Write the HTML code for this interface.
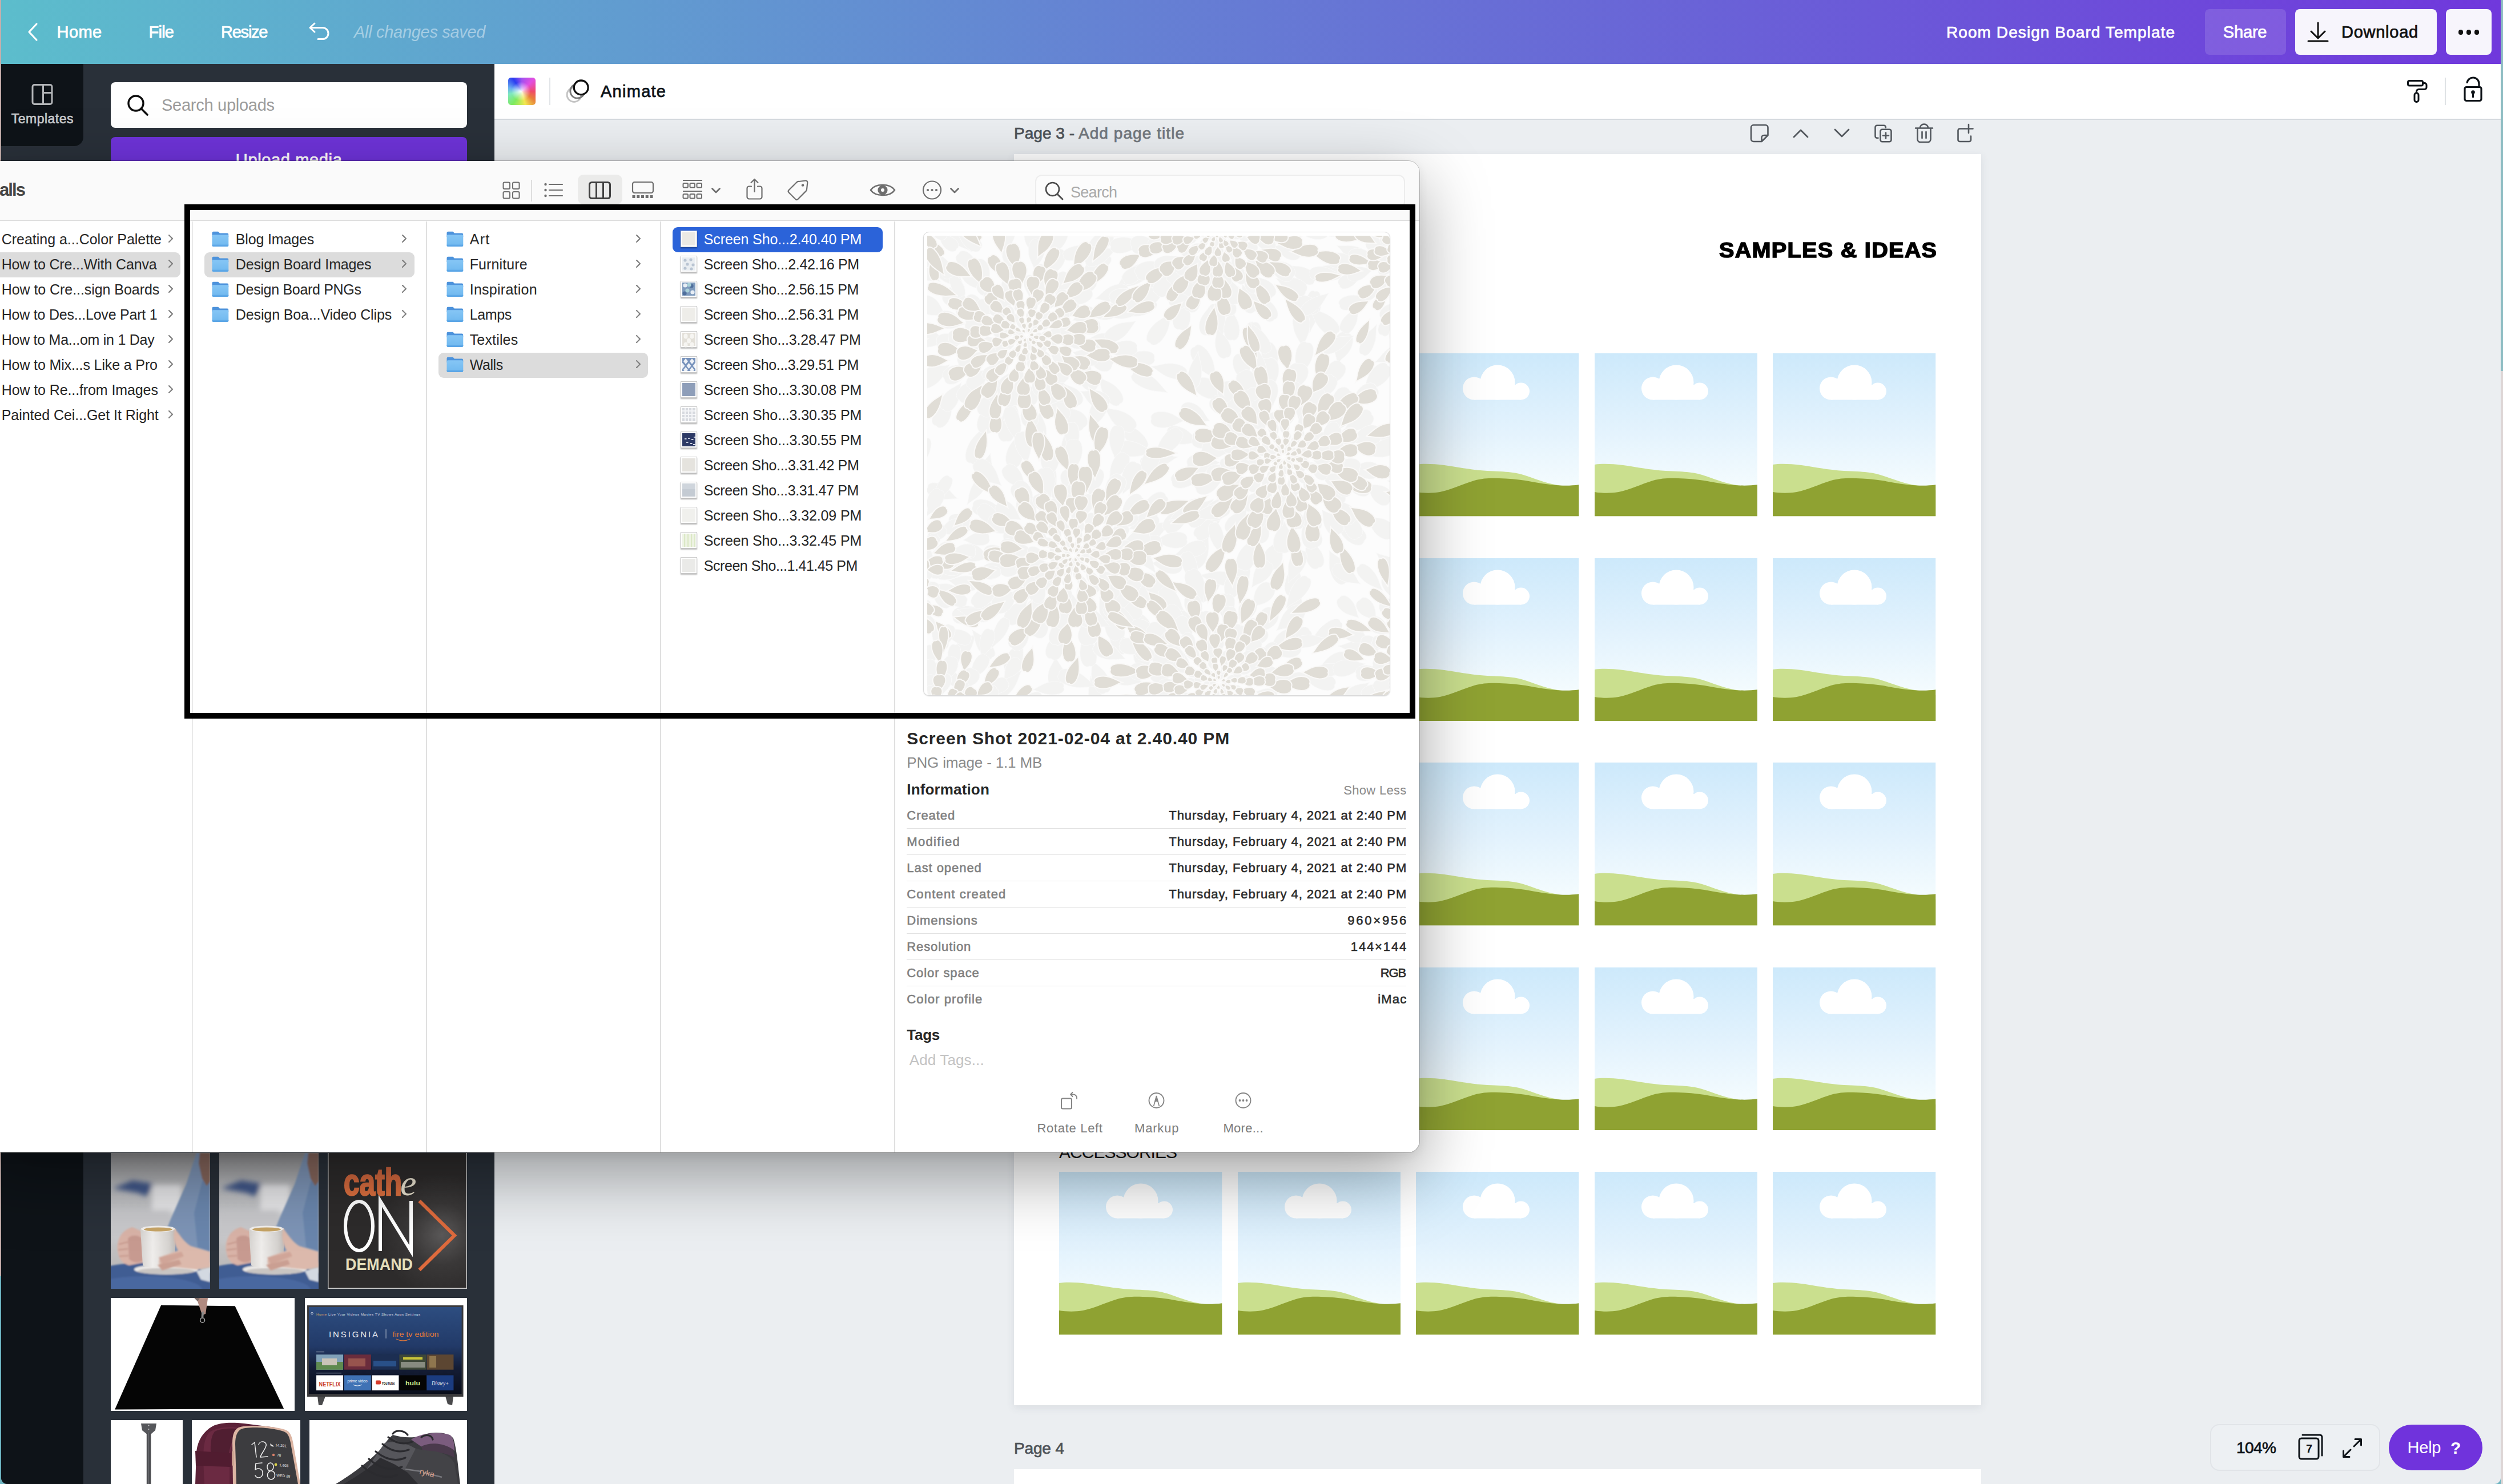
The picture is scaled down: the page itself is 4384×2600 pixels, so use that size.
<!DOCTYPE html>
<html><head><meta charset="utf-8"><title>Canva</title><style>html,body{margin:0;padding:0;overflow:hidden;}
#root{position:absolute;left:0;top:0;width:4384px;height:2600px;overflow:hidden;}
body{width:4384px;height:2600px;overflow:hidden;position:relative;background:#ebeef1;font-family:"Liberation Sans",sans-serif;}
.b{position:absolute;display:block;}
.t{position:absolute;white-space:pre;font-family:"Liberation Sans",sans-serif;}
</style></head><body><div id="root">
<svg width="0" height="0" style="position:absolute"><defs>
<linearGradient id="sky" x1="0" y1="0" x2="0" y2="1"><stop offset="0" stop-color="#cde9fb"/><stop offset="0.45" stop-color="#e2f2fd"/><stop offset="0.8" stop-color="#f3fbfe"/></linearGradient>
<symbol id="ph" viewBox="0 0 285.5 285.5">
<rect width="285.5" height="285.5" fill="url(#sky)"/>
<path d="M0 195 C12 193 30 193.5 50 196 C75 199.5 95 204 125 206 C160 207.5 175 208 196 215.5 C215 222 232 229 252 231.5 L285.5 240 L285.5 285.5 L0 285.5 Z" fill="#cadf8e"/>
<path d="M0 243 C12 245 28 245.5 42 243 C62 239 82 229 102 223 C118 218.5 132 218.5 146 219 C162 219.5 176 220.5 192 223 C212 226.5 232 230.5 252 231.5 C266 232 276 231.5 285.5 230.2 L285.5 285.5 L0 285.5 Z" fill="#8fa232"/>
<circle cx="102" cy="61.5" r="20" fill="#fff"/><circle cx="143" cy="51" r="30.5" fill="#fff"/><circle cx="184" cy="66.5" r="15" fill="#fff"/>
<rect x="102" y="55" width="82" height="26.5" fill="#fff"/>
</symbol></defs></svg>
<div class="b" style="left:0px;top:0px;width:4384px;height:2600px;background:linear-gradient(#c5afac 0,#c5afac 86%,#6eb5c2 86%,#6eb5c2 100%);"></div>
<div class="b" style="left:4380px;top:0px;width:4px;height:2600px;background:linear-gradient(#8dbcc2 0,#8dbcc2 25%,#ddd5d5 25%,#ddd5d5 100%);"></div>
<div class="b" style="left:2px;top:0px;width:4378px;height:2600px;background:#ebeef1;border-bottom-right-radius:11px;border-bottom-left-radius:11px;"></div>
<div class="b" style="left:2px;top:0px;width:4378px;height:112px;background:linear-gradient(90deg,#5cbdcc 0%,#7038dc 100%);"></div>
<svg class="b" style="left:46px;top:36px;" width="24" height="40" viewBox="0 0 24 40"><path d="M18 6 L5 20 L18 34" fill="none" stroke="#fff" stroke-width="3.2" stroke-linecap="round" stroke-linejoin="round"/></svg>
<div class="t" style="top:37.0px;font-size:29px;line-height:38px;color:#fff;-webkit-text-stroke:0.75px #fff;letter-spacing:0.380px;left:99.6px;">Home</div>
<div class="t" style="top:37.0px;font-size:29px;line-height:38px;color:#fff;-webkit-text-stroke:0.75px #fff;letter-spacing:-0.745px;left:260.5px;">File</div>
<div class="t" style="top:37.0px;font-size:29px;line-height:38px;color:#fff;-webkit-text-stroke:0.75px #fff;letter-spacing:-1.231px;left:387.0px;">Resize</div>
<svg class="b" style="left:538px;top:36px;" width="44" height="38" viewBox="0 0 44 38"><path d="M13 5 L5 12.5 L13 20 M5 12.5 H27 a10 10 0 0 1 0 20 H19" fill="none" stroke="#fff" stroke-width="3" stroke-linecap="round" stroke-linejoin="round"/></svg>
<div class="t" style="top:37.0px;font-size:29px;line-height:38px;color:rgba(255,255,255,0.45);font-style:italic;letter-spacing:-0.305px;left:620.0px;">All changes saved</div>
<div class="t" style="top:39.0px;font-size:28px;line-height:36px;color:#fff;-webkit-text-stroke:0.73px #fff;letter-spacing:1.079px;left:3409.0px;">Room Design Board Template</div>
<div class="b" style="left:3862px;top:16px;width:142px;height:80px;background:rgba(255,255,255,0.13);border-radius:8px;"></div>
<div class="t" style="top:37.0px;font-size:29px;line-height:38px;color:#fff;-webkit-text-stroke:0.75px #fff;letter-spacing:-0.173px;left:3893.8px;">Share</div>
<div class="b" style="left:4020px;top:16px;width:248px;height:80px;background:#f7f5fc;border-radius:8px;"></div>
<svg class="b" style="left:4040px;top:36px;" width="40" height="40" viewBox="0 0 40 40"><path d="M20 4 V30 M8 19 L20 31 L32 19 M3 36 H37" fill="none" stroke="#111" stroke-width="3" stroke-linecap="round" stroke-linejoin="round"/></svg>
<div class="t" style="top:37.0px;font-size:29px;line-height:38px;color:#111;-webkit-text-stroke:0.75px #111;letter-spacing:0.745px;left:4101.0px;">Download</div>
<div class="b" style="left:4284px;top:16px;width:80px;height:80px;background:#f7f5fc;border-radius:8px;"></div>
<div class="b" style="left:4305.9px;top:52.0px;width:8.6px;height:8.6px;background:#111;border-radius:50%;"></div>
<div class="b" style="left:4319.9px;top:52.0px;width:8.6px;height:8.6px;background:#111;border-radius:50%;"></div>
<div class="b" style="left:4333.9px;top:52.0px;width:8.6px;height:8.6px;background:#111;border-radius:50%;"></div>
<div class="b" style="left:2px;top:112px;width:864px;height:2488px;background:#293039;border-bottom-left-radius:11px;"></div>
<div class="b" style="left:2px;top:112px;width:144px;height:144px;background:#0e1318;border-bottom-right-radius:16px;"></div>
<div class="b" style="left:2px;top:400px;width:144px;height:2200px;background:#0e1318;border-bottom-left-radius:11px;"></div>
<svg class="b" style="left:54px;top:145px;" width="40" height="40" viewBox="0 0 40 40"><rect x="3" y="3.5" width="34" height="34" rx="3.5" fill="none" stroke="#b3b5b8" stroke-width="3"/><path d="M21.5 3.5 V37.5 M21.5 17.5 H37" stroke="#b3b5b8" stroke-width="3" fill="none"/></svg>
<div class="t" style="top:193.0px;font-size:23px;line-height:30px;color:#c9cacc;-webkit-text-stroke:0.60px #c9cacc;letter-spacing:0.471px;left:19.8px;">Templates</div>
<div class="b" style="left:194px;top:144px;width:624px;height:80px;background:#fff;border-radius:8px;"></div>
<svg class="b" style="left:220px;top:163px;" width="44" height="42" viewBox="0 0 44 42"><circle cx="18" cy="18" r="13" fill="none" stroke="#0d0d0d" stroke-width="3.4"/><path d="M27.5 27.5 L38 38" stroke="#0d0d0d" stroke-width="3.6" stroke-linecap="round"/></svg>
<div class="t" style="top:165.0px;font-size:29px;line-height:38px;color:#9b9b9b;letter-spacing:-0.272px;left:283.0px;">Search uploads</div>
<div class="b" style="left:194px;top:240px;width:624px;height:80px;background:#6e33d8;border-radius:8px;"></div>
<div class="t" style="top:260.5px;font-size:29px;line-height:38px;color:#fff;-webkit-text-stroke:0.75px #fff;letter-spacing:0.641px;left:412.8px;">Upload media</div>
<div class="b" style="left:866px;top:112px;width:3514px;height:96px;background:#fff;"></div>
<div class="b" style="left:866px;top:208px;width:3514px;height:2px;background:#d4d9de;"></div>
<div class="b" style="left:890px;top:136px;width:48px;height:48px;border-radius:5px;background:radial-gradient(circle at 47% 50%,rgba(255,255,255,.95) 0,rgba(255,255,255,.55) 18%,rgba(255,255,255,0) 48%),conic-gradient(from 0deg at 50% 50%,#a050f0 0deg,#e24fe0 45deg,#f04a6a 90deg,#e8803a 125deg,#f2e850 165deg,#7eea60 215deg,#7ee8c0 258deg,#6ab0f0 285deg,#2a3cf0 325deg,#a050f0 360deg);"></div>
<div class="b" style="left:962px;top:136px;width:2px;height:48px;background:#e1e4e7;"></div>
<svg class="b" style="left:988px;top:136px;" width="48" height="48" viewBox="0 0 48 48"><circle cx="17.5" cy="30" r="12.4" fill="none" stroke="#c4c4c4" stroke-width="3"/><circle cx="23.3" cy="23.7" r="12.4" fill="none" stroke="#7c7c7c" stroke-width="3"/><circle cx="29.7" cy="17.4" r="12.4" fill="#fff" stroke="#111" stroke-width="3.3"/></svg>
<div class="t" style="top:141.0px;font-size:29px;line-height:38px;color:#0e1318;-webkit-text-stroke:0.75px #0e1318;letter-spacing:1.268px;left:1052.0px;">Animate</div>
<svg class="b" style="left:4212px;top:136px;" width="44" height="48" viewBox="0 0 44 48"><rect x="5.5" y="5.5" width="26" height="8.5" rx="2.5" fill="none" stroke="#0e1318" stroke-width="3"/><path d="M31.5 9.5 H34.5 a3.5 3.5 0 0 1 3.5 3.5 V17 a3.5 3.5 0 0 1 -3.5 3.5 H24.5 a4 4 0 0 0 -4 4 V27" fill="none" stroke="#0e1318" stroke-width="3"/><rect x="17" y="27" width="7" height="15.5" rx="3.2" fill="none" stroke="#0e1318" stroke-width="3"/></svg>
<div class="b" style="left:4282px;top:136px;width:2px;height:48px;background:#dfe2e5;"></div>
<svg class="b" style="left:4310px;top:132px;" width="44" height="50" viewBox="0 0 44 50"><rect x="7" y="20.5" width="29" height="24" rx="3" fill="none" stroke="#0e1318" stroke-width="3.2"/><path d="M11 14 a10.5 10.5 0 0 1 21 1 V20" fill="none" stroke="#0e1318" stroke-width="3.2"/><circle cx="21.5" cy="29.5" r="3.3" fill="#0e1318"/><path d="M21.5 30 V38" stroke="#0e1318" stroke-width="3" stroke-linecap="round"/></svg>
<div class="t" style="top:216.0px;font-size:28px;line-height:36px;color:#4d5258;-webkit-text-stroke:0.73px #4d5258;letter-spacing:0.020px;left:1776.0px;">Page 3 -</div>
<div class="t" style="top:216.0px;font-size:28px;line-height:36px;color:#72777d;-webkit-text-stroke:0.73px #72777d;letter-spacing:1.058px;left:1889.0px;">Add page title</div>
<svg class="b" style="left:3062px;top:215px;" width="38" height="38" viewBox="0 0 38 38"><path d="M34.5 22 V8.5 a4.5 4.5 0 0 0 -4.5 -4.5 H9.5 a4.5 4.5 0 0 0 -4.5 4.5 V28.5 a4.5 4.5 0 0 0 4.5 4.5 H23.5 Z M23.5 33 V26 a4 4 0 0 1 4 -4 H34.5" fill="none" stroke="#52575d" stroke-width="2.6" stroke-linejoin="round"/></svg>
<svg class="b" style="left:3138px;top:220px;" width="32" height="28" viewBox="0 0 32 28"><path d="M4 20 L16 8 L28 20" fill="none" stroke="#52575d" stroke-width="2.8" stroke-linecap="round" stroke-linejoin="round"/></svg>
<svg class="b" style="left:3210px;top:220px;" width="32" height="28" viewBox="0 0 32 28"><path d="M4 7 L16 19 L28 7" fill="none" stroke="#52575d" stroke-width="2.8" stroke-linecap="round" stroke-linejoin="round"/></svg>
<svg class="b" style="left:3280px;top:215px;" width="38" height="38" viewBox="0 0 38 38"><rect x="13.5" y="11.7" width="19" height="21.6" rx="3.2" fill="none" stroke="#52575d" stroke-width="2.6"/><path d="M9.5 26.8 H7.5 a3 3 0 0 1 -3 -3 V7.7 a3 3 0 0 1 3 -3 H19.8 a3 3 0 0 1 3 3 V8.5" fill="none" stroke="#52575d" stroke-width="2.6" stroke-linecap="round"/><path d="M23 17.5 V27.5 M18 22.5 H28" stroke="#52575d" stroke-width="2.6" stroke-linecap="round"/></svg>
<svg class="b" style="left:3351px;top:214px;" width="38" height="40" viewBox="0 0 38 40"><path d="M4 10.5 H34 M7.5 10.5 V30 a5 5 0 0 0 5 5 H25.5 a5 5 0 0 0 5 -5 V10.5 M12 10 a7 6.5 0 0 1 14 0 M15.5 17 V28 M22.5 17 V28" fill="none" stroke="#52575d" stroke-width="2.6" stroke-linecap="round" stroke-linejoin="round"/></svg>
<svg class="b" style="left:3424px;top:213.5px;" width="38" height="40" viewBox="0 0 38 40"><path d="M16 11.5 H8.5 a3 3 0 0 0 -3 3 V31 a3 3 0 0 0 3 3 H25 a3 3 0 0 0 3 -3 V24.5 M24 4 V19 M16.5 11.5 H31.5" fill="none" stroke="#52575d" stroke-width="2.6" stroke-linecap="round" stroke-linejoin="round"/></svg>
<div class="b" style="left:1776px;top:270px;width:1694px;height:2192px;background:#fff;box-shadow:0 4px 14px rgba(60,70,90,0.10);"></div>
<div class="t" style="top:415.2px;font-size:37px;line-height:48px;color:#000;font-weight:700;letter-spacing:1.204px;left:3010.5px;transform:scaleX(1.07);transform-origin:0 50%;-webkit-text-stroke:1.5px #000;">SAMPLES &amp; IDEAS</div>
<div class="t" style="top:1998.5px;font-size:30px;line-height:39px;color:#111;letter-spacing:-0.973px;left:1855.0px;">ACCESSORIES</div>
<svg class="b" style="left:2480px;top:619px" width="285.5" height="285.5"><use href="#ph"/></svg>
<svg class="b" style="left:2792.5px;top:619px" width="285.5" height="285.5"><use href="#ph"/></svg>
<svg class="b" style="left:3105px;top:619px" width="285.5" height="285.5"><use href="#ph"/></svg>
<svg class="b" style="left:2480px;top:977.5px" width="285.5" height="285.5"><use href="#ph"/></svg>
<svg class="b" style="left:2792.5px;top:977.5px" width="285.5" height="285.5"><use href="#ph"/></svg>
<svg class="b" style="left:3105px;top:977.5px" width="285.5" height="285.5"><use href="#ph"/></svg>
<svg class="b" style="left:2480px;top:1336px" width="285.5" height="285.5"><use href="#ph"/></svg>
<svg class="b" style="left:2792.5px;top:1336px" width="285.5" height="285.5"><use href="#ph"/></svg>
<svg class="b" style="left:3105px;top:1336px" width="285.5" height="285.5"><use href="#ph"/></svg>
<svg class="b" style="left:2480px;top:1694.5px" width="285.5" height="285.5"><use href="#ph"/></svg>
<svg class="b" style="left:2792.5px;top:1694.5px" width="285.5" height="285.5"><use href="#ph"/></svg>
<svg class="b" style="left:3105px;top:1694.5px" width="285.5" height="285.5"><use href="#ph"/></svg>
<svg class="b" style="left:1855px;top:2053px" width="285.5" height="285.5"><use href="#ph"/></svg>
<svg class="b" style="left:2167.5px;top:2053px" width="285.5" height="285.5"><use href="#ph"/></svg>
<svg class="b" style="left:2480px;top:2053px" width="285.5" height="285.5"><use href="#ph"/></svg>
<svg class="b" style="left:2792.5px;top:2053px" width="285.5" height="285.5"><use href="#ph"/></svg>
<svg class="b" style="left:3105px;top:2053px" width="285.5" height="285.5"><use href="#ph"/></svg>
<div class="t" style="top:2520.0px;font-size:28px;line-height:36px;color:#4d5258;-webkit-text-stroke:0.73px #4d5258;letter-spacing:-0.150px;left:1776.0px;">Page 4</div>
<div class="b" style="left:1776px;top:2574px;width:1694px;height:26px;background:#fff;"></div>
<div class="b" style="left:3871px;top:2495px;width:298px;height:82px;box-sizing:border-box;border:2px solid #e1e4e8;border-radius:16px;background:#edf0f3;"></div>
<div class="t" style="top:2519.0px;font-size:28px;line-height:36px;color:#0e1318;-webkit-text-stroke:0.73px #0e1318;letter-spacing:-0.542px;left:3917.0px;">104%</div>
<svg class="b" style="left:4024px;top:2510px;" width="50" height="50" viewBox="0 0 50 50"><rect x="3" y="10" width="34" height="36" rx="4" fill="none" stroke="#0e1318" stroke-width="3"/><path d="M9 4 H39 a4 4 0 0 1 4 4 V40" fill="none" stroke="#0e1318" stroke-width="3" stroke-linecap="round"/></svg>
<div class="t" style="top:2525.0px;font-size:20px;line-height:26px;color:#0e1318;font-weight:700;left:4039.0px;">7</div>
<svg class="b" style="left:4100px;top:2517px;" width="40" height="40" viewBox="0 0 40 40"><path d="M23 17 L35 5 M25 4.5 H35.5 V15 M17 23 L5 35 M4.5 25 V35.5 H15" fill="none" stroke="#0e1318" stroke-width="3" stroke-linecap="round" stroke-linejoin="round"/></svg>
<div class="b" style="left:4184px;top:2496px;width:164px;height:80px;background:#7033dc;border-radius:40px;"></div>
<div class="t" style="top:2517.0px;font-size:29px;line-height:38px;color:#fff;letter-spacing:-0.219px;left:4216.5px;">Help</div>
<div class="t" style="top:2516.5px;font-size:30px;line-height:39px;color:#fff;font-weight:700;left:4292.0px;">?</div>
<svg class="b" style="left:193.8px;top:2019.5px;" width="174" height="238" viewBox="0 0 174 238"><defs>
<linearGradient id="cbga" x1="0" y1="0" x2="0" y2="1"><stop offset="0" stop-color="#8e8e90"/><stop offset="0.22" stop-color="#b4b5b8"/><stop offset="0.5" stop-color="#cbcccf"/><stop offset="0.8" stop-color="#bdbbbb"/></linearGradient>
<filter id="bla" x="-20%" y="-20%" width="140%" height="140%"><feGaussianBlur stdDeviation="5"/></filter>
<filter id="bsa" x="-20%" y="-20%" width="140%" height="140%"><feGaussianBlur stdDeviation="1.5"/></filter>
<linearGradient id="muga" x1="0" y1="0" x2="1" y2="0"><stop offset="0" stop-color="#d6d3d0"/><stop offset="0.35" stop-color="#efedeb"/><stop offset="0.8" stop-color="#d6d3d0"/><stop offset="1" stop-color="#bfbbb8"/></linearGradient>
</defs>
<rect width="174" height="238" fill="url(#cbga)"/>
<g filter="url(#bla)">
<path d="M4 62 L38 48 L76 54 L62 76 L48 70 Z" fill="#3f5788"/>
<rect x="72" y="56" width="52" height="50" fill="#e6e6e8"/>
<rect x="0" y="100" width="105" height="55" fill="#c8c8cb"/>
</g>
<g filter="url(#bsa)">
<path d="M174 0 L150 0 L132 55 L104 118 L92 150 L116 178 L174 192 Z" fill="#7d94b6"/>
<path d="M174 40 L160 50 L146 105 L152 165 L174 172 Z" fill="#6a86ad"/>
<path d="M174 0 L156 0 L154 18 L160 45 L168 58 L174 50 Z" fill="#86665c"/>
<ellipse cx="66" cy="236" rx="135" ry="44" fill="#405d93"/>
<ellipse cx="60" cy="240" rx="100" ry="24" fill="#4a68a0"/>
<path d="M150 207 L174 200 L174 226 L158 222 Z" fill="#d3d9e1"/>
<ellipse cx="97" cy="204" rx="56" ry="9" fill="#ebe9e7"/>
<ellipse cx="97" cy="207" rx="50" ry="5.5" fill="#c9c5c2"/>
<path d="M12 172 C9 152 20 134 38 130 L56 138 L58 192 L32 197 C18 193 14 184 12 172 Z" fill="#d9b3a7"/>
<path d="M30 150 C34 143 50 143 54 150 L56 188 C48 194 38 192 32 186 Z" fill="#c79a90"/>
<path d="M14 160 L30 156 M13 170 L30 168 M15 181 L31 180" stroke="#c39488" stroke-width="2" fill="none"/>
</g>
<path d="M52 134 C52 128 114 128 114 134 L112 196 C112 203 56 203 56 196 Z" fill="url(#muga)"/>
<ellipse cx="83" cy="133" rx="30" ry="5.5" fill="#f1efed"/>
<ellipse cx="83" cy="134" rx="25" ry="3.4" fill="#c7a466"/>
<g filter="url(#bsa)">
<path d="M112 132 C120 142 128 156 140 163 L174 173 L174 200 L150 204 L110 200 L88 197 C80 191 86 181 96 179 L118 171 C112 161 108 148 112 132 Z" fill="#dcb9ac"/>
<path d="M84 183 L124 173 L128 181 L90 195 Z" fill="#d0a598"/>
<path d="M82 196 L120 187 L124 195 L90 206 Z" fill="#ca9f92"/>
</g></svg>
<svg class="b" style="left:383.8px;top:2019.5px;" width="174" height="238" viewBox="0 0 174 238"><defs>
<linearGradient id="cbgb" x1="0" y1="0" x2="0" y2="1"><stop offset="0" stop-color="#8e8e90"/><stop offset="0.22" stop-color="#b4b5b8"/><stop offset="0.5" stop-color="#cbcccf"/><stop offset="0.8" stop-color="#bdbbbb"/></linearGradient>
<filter id="blb" x="-20%" y="-20%" width="140%" height="140%"><feGaussianBlur stdDeviation="5"/></filter>
<filter id="bsb" x="-20%" y="-20%" width="140%" height="140%"><feGaussianBlur stdDeviation="1.5"/></filter>
<linearGradient id="mugb" x1="0" y1="0" x2="1" y2="0"><stop offset="0" stop-color="#d6d3d0"/><stop offset="0.35" stop-color="#efedeb"/><stop offset="0.8" stop-color="#d6d3d0"/><stop offset="1" stop-color="#bfbbb8"/></linearGradient>
</defs>
<rect width="174" height="238" fill="url(#cbgb)"/>
<g filter="url(#blb)">
<path d="M4 62 L38 48 L76 54 L62 76 L48 70 Z" fill="#3f5788"/>
<rect x="72" y="56" width="52" height="50" fill="#e6e6e8"/>
<rect x="0" y="100" width="105" height="55" fill="#c8c8cb"/>
</g>
<g filter="url(#bsb)">
<path d="M174 0 L150 0 L132 55 L104 118 L92 150 L116 178 L174 192 Z" fill="#7d94b6"/>
<path d="M174 40 L160 50 L146 105 L152 165 L174 172 Z" fill="#6a86ad"/>
<path d="M174 0 L156 0 L154 18 L160 45 L168 58 L174 50 Z" fill="#86665c"/>
<ellipse cx="66" cy="236" rx="135" ry="44" fill="#405d93"/>
<ellipse cx="60" cy="240" rx="100" ry="24" fill="#4a68a0"/>
<path d="M150 207 L174 200 L174 226 L158 222 Z" fill="#d3d9e1"/>
<ellipse cx="97" cy="204" rx="56" ry="9" fill="#ebe9e7"/>
<ellipse cx="97" cy="207" rx="50" ry="5.5" fill="#c9c5c2"/>
<path d="M12 172 C9 152 20 134 38 130 L56 138 L58 192 L32 197 C18 193 14 184 12 172 Z" fill="#d9b3a7"/>
<path d="M30 150 C34 143 50 143 54 150 L56 188 C48 194 38 192 32 186 Z" fill="#c79a90"/>
<path d="M14 160 L30 156 M13 170 L30 168 M15 181 L31 180" stroke="#c39488" stroke-width="2" fill="none"/>
</g>
<path d="M52 134 C52 128 114 128 114 134 L112 196 C112 203 56 203 56 196 Z" fill="url(#mugb)"/>
<ellipse cx="83" cy="133" rx="30" ry="5.5" fill="#f1efed"/>
<ellipse cx="83" cy="134" rx="25" ry="3.4" fill="#c7a466"/>
<g filter="url(#bsb)">
<path d="M112 132 C120 142 128 156 140 163 L174 173 L174 200 L150 204 L110 200 L88 197 C80 191 86 181 96 179 L118 171 C112 161 108 148 112 132 Z" fill="#dcb9ac"/>
<path d="M84 183 L124 173 L128 181 L90 195 Z" fill="#d0a598"/>
<path d="M82 196 L120 187 L124 195 L90 206 Z" fill="#ca9f92"/>
</g></svg>
<svg class="b" style="left:573.9px;top:2019.5px;" width="244" height="238" viewBox="0 0 244 238"><defs><radialGradient id="cg" cx="0.82" cy="0.6" r="0.45"><stop offset="0" stop-color="#5b5959"/><stop offset="0.5" stop-color="#3a3838"/><stop offset="1" stop-color="#2d2b2b"/></radialGradient>
<linearGradient id="co" x1="0" y1="0" x2="0" y2="1"><stop offset="0" stop-color="#c9603c"/><stop offset="1" stop-color="#e27440"/></linearGradient></defs>
<rect width="244" height="238" fill="url(#cg)"/>
<rect x="0.75" y="-2" width="242.5" height="239.25" fill="none" stroke="#c9c9c9" stroke-width="1.5"/>
<text x="28" y="74" font-family="Liberation Sans" font-weight="700" font-size="66" fill="url(#co)" textLength="102" lengthAdjust="spacingAndGlyphs" stroke="url(#co)" stroke-width="2.5">cath</text>
<text x="127" y="74" font-family="Liberation Serif" font-style="italic" font-size="64" fill="#e9e2cf">e</text>
<ellipse cx="55" cy="128" rx="24" ry="43" fill="none" stroke="#fff" stroke-width="6"/>
<path d="M92 172 V84 L146 172 V84" fill="none" stroke="#fff" stroke-width="6" stroke-linejoin="miter"/>
<text x="31" y="204.5" font-family="Liberation Sans" font-weight="700" font-size="30" fill="#e4ddba" textLength="118" lengthAdjust="spacingAndGlyphs">DEMAND</text>
<path d="M160.5 84 L222 144.6 L160.5 205" fill="none" stroke="#df6b3d" stroke-width="6"/></svg>
<svg class="b" style="left:193.8px;top:2273.8px;" width="322.2" height="198" viewBox="0 0 322 198"><rect width="322" height="198" fill="#fff"/>
<path d="M88 12.7 L217.5 14.3 L303 194 L7 195.5 Z" fill="#050505"/>
<path d="M150 0 L170 0 L166 28 L160 30 Z" fill="#b08a80"/>
<path d="M146 0 L156 0 L152 6 Z" fill="#7c6a66"/>
<circle cx="160.5" cy="39" r="4" fill="none" stroke="#b5b5b5" stroke-width="1.5"/>
<path d="M159 24 L163 24 L162 36 L158.5 36 Z" fill="#8a8a8a"/></svg>
<svg class="b" style="left:533.9px;top:2273.8px;" width="284.1" height="198" viewBox="0 0 284 198"><defs><linearGradient id="tvg" x1="0" y1="0" x2="0" y2="1"><stop offset="0" stop-color="#2d4d80"/><stop offset="0.45" stop-color="#223a68"/><stop offset="0.7" stop-color="#141d36"/><stop offset="1" stop-color="#0a0e1b"/></linearGradient></defs>
<rect width="284" height="198" fill="#fff"/>
<path d="M22 172 L36 172 L30 188 L24 188 Z M246 172 L260 172 L258 188 L250 186 Z" fill="#4a4a4c"/>
<rect x="4" y="13" width="273.5" height="160" fill="#3a3a3c"/>
<rect x="7" y="16" width="267.5" height="152" fill="url(#tvg)"/>
<text x="20" y="30.5" font-family="Liberation Sans" font-size="6.2" fill="#d5dbe6" textLength="182" lengthAdjust="spacing"><tspan fill="#e0a86a">Home</tspan>  Live  Your Videos  Movies  TV Shows  Apps  Settings</text>
<circle cx="12.5" cy="27" r="1.8" fill="none" stroke="#d5dbe6" stroke-width="0.8"/>
<text x="42" y="69" font-family="Liberation Sans" font-size="15" fill="#e8ecf2" textLength="86" lengthAdjust="spacing">INSIGNIA</text>
<rect x="141.5" y="55" width="1" height="16" fill="#b9c2d0"/>
<text x="153.5" y="68" font-family="Liberation Sans" font-size="12.5" fill="#e4793a" textLength="81" lengthAdjust="spacingAndGlyphs">fire tv edition</text>
<path d="M160 72 Q172 78 184 72" fill="none" stroke="#e4793a" stroke-width="1.3"/>
<rect x="20" y="94" width="14" height="1.2" fill="#9aa5b8"/><rect x="20" y="131" width="44" height="1.2" fill="#9aa5b8"/><rect x="20" y="99.2" width="47" height="26.5" fill="#7fa0b8"/><rect x="68.8" y="99.2" width="47" height="26.5" fill="#6a2c3c"/><rect x="117.4" y="99.2" width="47" height="26.5" fill="#1c2e52"/><rect x="165.4" y="99.2" width="47" height="26.5" fill="#3d4738"/><rect x="213.4" y="99.2" width="47" height="26.5" fill="#5c4632"/><rect x="20" y="112" width="47" height="13.7" fill="#5e8a4f"/><rect x="30" y="106" width="26" height="12" fill="#c9c4b8"/><rect x="172" y="104" width="34" height="4" fill="#c9c43a"/><rect x="168" y="112" width="42" height="10" fill="#b9b9b0" opacity="0.6"/><rect x="120" y="110" width="40" height="10" fill="#2f5fa0" opacity="0.7"/><rect x="76" y="106" width="30" height="14" fill="#b5705a" opacity="0.6"/><rect x="218" y="102" width="12" height="20" fill="#a58a5a" opacity="0.7"/><rect x="20" y="135.5" width="47" height="26.5" fill="#fff"/><rect x="68.8" y="135.5" width="47" height="26.5" fill="#3f72b5"/><rect x="117.4" y="135.5" width="47" height="26.5" fill="#fff"/><rect x="165.4" y="135.5" width="47" height="26.5" fill="#050505"/><rect x="213.4" y="135.5" width="47" height="26.5" fill="#1b3c80"/><text x="24.5" y="154.5" font-family="Liberation Sans" font-weight="700" font-size="11.5" fill="#c9442c" textLength="38" lengthAdjust="spacingAndGlyphs">NETFLIX</text>
<text x="74.5" y="148" font-family="Liberation Sans" font-size="6.5" fill="#fff" textLength="35" lengthAdjust="spacingAndGlyphs">prime video</text><path d="M84 152 Q92 156 100 152" fill="none" stroke="#fff" stroke-width="0.9"/>
<rect x="124" y="144.5" width="9" height="7" rx="1.8" fill="#d63a2a"/><text x="134.5" y="152" font-family="Liberation Sans" font-weight="700" font-size="8" fill="#222" textLength="23" lengthAdjust="spacingAndGlyphs">YouTube</text>
<text x="176" y="153" font-family="Liberation Sans" font-weight="700" font-size="11.5" fill="#cde78a" textLength="26" lengthAdjust="spacingAndGlyphs">hulu</text>
<text x="222" y="153" font-family="Liberation Serif" font-style="italic" font-size="9.5" fill="#e8eefb" textLength="30" lengthAdjust="spacingAndGlyphs">Disney+</text></svg>
<svg class="b" style="left:193.8px;top:2488px;" width="126.5" height="112" viewBox="0 0 126.5 112"><rect width="126.5" height="112" fill="#fff"/>
<path d="M53 6 L80 6 L78 18 L71 24 L62.5 24 L55 18 Z" fill="#56575b"/>
<circle cx="66.5" cy="9.5" r="1" fill="#d0d0d0"/><circle cx="66.5" cy="16" r="1" fill="#d0d0d0"/>
<rect x="62.8" y="22" width="7.6" height="92" fill="#4d4e52"/>
<rect x="65" y="22" width="1.6" height="92" fill="#6a6b70"/></svg>
<svg class="b" style="left:335.8px;top:2488px;" width="190" height="112" viewBox="0 0 190 112"><rect width="190" height="112" fill="#fff"/>
<path d="M6 112 L8 56 C10 36 20 20 36 11 C50 4 70 4 92 6 L146 13 L96 26 L80 60 L82 112 Z" fill="#5c2238"/>
<path d="M30 22 C44 12 66 11 88 14 L80 26 C70 38 66 56 66 76 L66 112 L22 112 L20 70 C20 48 22 32 30 22 Z" fill="#6b2a42"/>
<path d="M40 20 C52 14 70 14 84 16 L76 28 C68 40 64 56 64 72 L34 70 C32 50 32 30 40 20 Z" fill="#3a1424" opacity="0.55"/>
<path d="M6 54 L68 58 L68 82 L7 80 Z" fill="#511c30"/>
<path d="M82 13 C100 7 150 11 166 18 C172 21 175 28 177 38 L190 112 L72 112 L71 40 C71 26 74 17 82 13 Z" fill="#dcb5a3"/>
<path d="M86 16 C102 10 148 14 163 21 C169 24 171 31 173 40 L186 112 L78 112 L76 42 C76 29 79 20 86 16 Z" fill="#3c3c3f"/>
<rect x="70" y="54" width="3.5" height="26" rx="1.7" fill="#c99f8e"/>
<g fill="none" stroke="#f2f2f2" stroke-width="1.5" stroke-linejoin="round" stroke-linecap="round">
<path d="M105 43 L110 39 L113 65"/><path d="M117 43 C119 35 132 37 130 45 C128 53 121 59 120 65 L133 64"/>
<path d="M123 75 L112 76 L111 87 C116 83 125 85 124 94 C123 102 114 103 111 97"/>
<ellipse cx="137.5" cy="82" rx="5.5" ry="7" transform="rotate(4 137.5 82)"/><ellipse cx="139" cy="96.5" rx="6.5" ry="7.5" transform="rotate(4 139 96.5)"/>
</g>
<text x="146" y="46" font-family="Liberation Sans" font-size="6.5" fill="#e8e8e8" transform="rotate(4 146 46)">14,291</text>
<text x="149" y="63.5" font-family="Liberation Sans" font-size="6.5" fill="#e8e8e8" transform="rotate(4 149 63)">78</text>
<text x="153" y="81" font-family="Liberation Sans" font-size="6.5" fill="#e8e8e8" transform="rotate(4 153 81)">1,603</text>
<text x="148" y="99" font-family="Liberation Sans" font-size="6.5" fill="#e8e8e8" transform="rotate(4 148 99)">WED 28</text>
<circle cx="143" cy="61" r="2.2" fill="#d9806a"/><circle cx="147" cy="78" r="2.4" fill="#d9d14a"/><path d="M137 41 L143 45 L143 47 L138 45 Z" fill="#e8e8e8"/></svg>
<svg class="b" style="left:541.7px;top:2488px;" width="276.5" height="112" viewBox="0 0 276.5 112"><rect width="276.5" height="112" fill="#fff"/>
<path d="M46 112 C66 100 96 80 122 54 C132 42 138 32 146 26 C166 32 190 32 206 24 C222 20 244 22 252 32 C258 50 260 80 264 112 Z" fill="#3b3b3f"/>
<path d="M178 34 C196 22 228 20 246 26 C252 30 254 42 254 54 C240 44 216 40 198 48 Z" fill="#7b5c7e"/>
<path d="M196 46 C212 38 236 40 252 52 L254 66 C240 56 214 54 200 60 Z" fill="#4a3a4c"/>
<path d="M146 30 C162 44 186 52 214 54 C234 56 248 64 254 76 L260 112 L124 112 C140 96 148 62 146 30 Z" fill="#434347"/>
<path d="M132 40 C150 36 170 40 186 50 L160 100 L96 92 Z" fill="#56565b"/>
<path d="M60 112 C84 98 106 84 124 66 L150 78 L172 92 L190 112 Z" fill="#2d2d31"/>
<g fill="none" stroke="#2b2b2f" stroke-width="3.2" stroke-linecap="round">
<path d="M138 30 C150 40 164 44 180 38"/><path d="M128 42 C142 54 158 58 174 52"/><path d="M116 55 C132 68 150 74 168 66"/><path d="M104 68 C122 84 142 90 162 82"/><path d="M92 80 C112 98 134 104 154 96"/>
<path d="M146 24 C152 16 166 18 172 26"/><path d="M196 30 C204 24 214 26 216 34"/>
</g>
<path d="M168 86 L196 90 M200 92 L232 100" stroke="#77777c" stroke-width="2.5" fill="none"/>
<text x="192" y="94" font-family="Liberation Sans" font-size="14" fill="#d9a08c" transform="rotate(14 192 94)">ryka</text></svg>
<div class="b" style="left:-40px;top:281.6px;width:2526px;height:1737.6px;background:#fff;border-radius:20px;box-shadow:0 0 0 1px rgba(0,0,0,0.22),0 40px 120px 0 rgba(0,0,0,0.37),0 6px 18px rgba(0,0,0,0.07);"></div>
<div class="b" style="left:-40px;top:281.6px;width:2526px;height:104.4px;background:#fafafa;border-radius:20px 20px 0 0;"></div>
<div class="b" style="left:0px;top:385.5px;width:2486px;height:1.3px;background:#dadada;"></div>
<div class="b" style="left:336.5px;top:387.5px;width:1.6px;height:1631.7px;background:#e0e0e0;"></div>
<div class="b" style="left:746px;top:387.5px;width:1.6px;height:1631.7px;background:#e0e0e0;"></div>
<div class="b" style="left:1156px;top:387.5px;width:1.6px;height:1631.7px;background:#e0e0e0;"></div>
<div class="b" style="left:1566px;top:387.5px;width:1.6px;height:1631.7px;background:#e0e0e0;"></div>
<div class="t" style="top:313.0px;font-size:31px;line-height:40px;color:#454545;font-weight:700;letter-spacing:-1.906px;left:-1.0px;">alls</div>
<svg class="b" style="left:879px;top:317px;" width="34" height="34" viewBox="0 0 34 34"><rect x="2.5" y="2.5" width="11.5" height="11.5" rx="2" fill="none" stroke="#6e6e6e" stroke-width="2"/><rect x="2.5" y="19" width="11.5" height="11.5" rx="2" fill="none" stroke="#6e6e6e" stroke-width="2"/><rect x="19" y="2.5" width="11.5" height="11.5" rx="2" fill="none" stroke="#6e6e6e" stroke-width="2"/><rect x="19" y="19" width="11.5" height="11.5" rx="2" fill="none" stroke="#6e6e6e" stroke-width="2"/></svg>
<div class="b" style="left:930px;top:315px;width:1.5px;height:38px;background:#dedede;"></div>
<svg class="b" style="left:950px;top:317px;" width="40" height="32" viewBox="0 0 40 32"><circle cx="5.5" cy="6" r="2.2" fill="#6e6e6e"/><path d="M12 6 H35" stroke="#6e6e6e" stroke-width="2.2" stroke-linecap="round"/><circle cx="5.5" cy="16" r="2.2" fill="#6e6e6e"/><path d="M12 16 H35" stroke="#6e6e6e" stroke-width="2.2" stroke-linecap="round"/><circle cx="5.5" cy="26" r="2.2" fill="#6e6e6e"/><path d="M12 26 H35" stroke="#6e6e6e" stroke-width="2.2" stroke-linecap="round"/></svg>
<div class="b" style="left:1012px;top:306px;width:78px;height:52px;background:#ebebea;border-radius:10px;"></div>
<svg class="b" style="left:1029px;top:316px;" width="44" height="36" viewBox="0 0 44 36"><rect x="3.5" y="3.5" width="36" height="28" rx="4" fill="none" stroke="#404040" stroke-width="3"/><path d="M15.5 4 V31 M27.5 4 V31" stroke="#404040" stroke-width="3"/></svg>
<svg class="b" style="left:1105px;top:316px;" width="42" height="34" viewBox="0 0 42 34"><rect x="3" y="3" width="36" height="19" rx="3.5" fill="none" stroke="#6e6e6e" stroke-width="2.2"/><rect x="2.5" y="26" width="5" height="5" fill="#6e6e6e"/><rect x="10.3" y="26" width="5" height="5" fill="#6e6e6e"/><rect x="18" y="26" width="5" height="5" fill="#6e6e6e"/><rect x="25.7" y="26" width="5" height="5" fill="#6e6e6e"/><rect x="33.5" y="26" width="5" height="5" fill="#6e6e6e"/></svg>
<svg class="b" style="left:1194px;top:314px;" width="38" height="38" viewBox="0 0 38 38"><path d="M2 2 H36 M2 21 H36" stroke="#6e6e6e" stroke-width="2"/><rect x="2.5" y="7" width="8.5" height="7.5" rx="1.8" fill="none" stroke="#6e6e6e" stroke-width="2"/><rect x="14.5" y="7" width="8.5" height="7.5" rx="1.8" fill="none" stroke="#6e6e6e" stroke-width="2"/><rect x="26.5" y="7" width="8.5" height="7.5" rx="1.8" fill="none" stroke="#6e6e6e" stroke-width="2"/><rect x="2.5" y="26" width="8.5" height="7.5" rx="1.8" fill="none" stroke="#6e6e6e" stroke-width="2"/><rect x="14.5" y="26" width="8.5" height="7.5" rx="1.8" fill="none" stroke="#6e6e6e" stroke-width="2"/><rect x="26.5" y="26" width="8.5" height="7.5" rx="1.8" fill="none" stroke="#6e6e6e" stroke-width="2"/></svg>
<svg class="b" style="left:1245px;top:327px;" width="18" height="14" viewBox="0 0 18 14"><path d="M2.5 3.5 L9 10 L15.5 3.5" fill="none" stroke="#6e6e6e" stroke-width="2.8" stroke-linecap="round" stroke-linejoin="round"/></svg>
<svg class="b" style="left:1305px;top:311px;" width="34" height="42" viewBox="0 0 34 42"><path d="M11 15.5 H7 a3.5 3.5 0 0 0 -3.5 3.5 V34 a3.5 3.5 0 0 0 3.5 3.5 H26 a3.5 3.5 0 0 0 3.5 -3.5 V19 a3.5 3.5 0 0 0 -3.5 -3.5 H22 M16.5 25 V3.5 M10.5 9 L16.5 3 L22.5 9" fill="none" stroke="#6e6e6e" stroke-width="2.2" stroke-linecap="round" stroke-linejoin="round"/></svg>
<svg class="b" style="left:1378px;top:313px;" width="42" height="42" viewBox="0 0 42 42"><path d="M21 5 L33 3.5 a3 3 0 0 1 3.3 3.3 L35 19 a4 4 0 0 1 -1.2 2.6 L19.5 36 a3 3 0 0 1 -4.2 0 L3.6 24.3 a3 3 0 0 1 0 -4.2 L18 5.8 A4 4 0 0 1 21 5 Z" fill="none" stroke="#6e6e6e" stroke-width="2.2" stroke-linejoin="round"/><circle cx="28" cy="11.5" r="2.3" fill="#6e6e6e"/></svg>
<svg class="b" style="left:1522px;top:317px;" width="48" height="32" viewBox="0 0 48 32"><path d="M3 16 C11 4 37 4 45 16 C37 28 11 28 3 16 Z" fill="none" stroke="#6e6e6e" stroke-width="2.6" stroke-linejoin="round"/><circle cx="24" cy="16" r="8.6" fill="#6e6e6e"/><circle cx="24" cy="16" r="3" fill="#fafafa"/></svg>
<svg class="b" style="left:1614px;top:315px;" width="38" height="38" viewBox="0 0 38 38"><circle cx="18.5" cy="18" r="15.5" fill="none" stroke="#6e6e6e" stroke-width="2.2"/><circle cx="11" cy="18" r="2.1" fill="#6e6e6e"/><circle cx="18.5" cy="18" r="2.1" fill="#6e6e6e"/><circle cx="26" cy="18" r="2.1" fill="#6e6e6e"/></svg>
<svg class="b" style="left:1663px;top:327px;" width="18" height="14" viewBox="0 0 18 14"><path d="M2.5 3.5 L9 10 L15.5 3.5" fill="none" stroke="#6e6e6e" stroke-width="2.8" stroke-linecap="round" stroke-linejoin="round"/></svg>
<div class="b" style="left:1813px;top:306px;width:648px;height:60px;box-sizing:border-box;border:2px solid #ededed;border-radius:12px;background:#fcfcfc;"></div>
<svg class="b" style="left:1828px;top:317px;" width="38" height="36" viewBox="0 0 38 36"><circle cx="15.5" cy="14.5" r="11.5" fill="none" stroke="#4c4c4c" stroke-width="2.6"/><path d="M23.8 23 L33 32" stroke="#4c4c4c" stroke-width="2.9" stroke-linecap="round"/></svg>
<div class="t" style="top:319.5px;font-size:27px;line-height:35px;color:#a9a9a9;letter-spacing:-0.713px;left:1875.0px;">Search</div>
<div class="b" style="left:-20px;top:442px;width:336px;height:43.5px;background:#dcdcdc;border-radius:9px;"></div>
<div class="t" style="top:402.9px;font-size:25px;line-height:32px;color:#262626;letter-spacing:-0.016px;left:2.7px;">Creating a...Color Palette</div>
<svg class="b" style="left:292.5px;top:409.4px;" width="12" height="18" viewBox="0 0 12 18"><path d="M3 3 L9 9 L3 15" fill="none" stroke="#7d7d7d" stroke-width="2.1" stroke-linecap="round" stroke-linejoin="round"/></svg>
<div class="t" style="top:446.9px;font-size:25px;line-height:32px;color:#262626;letter-spacing:-0.141px;left:2.7px;">How to Cre...With Canva</div>
<svg class="b" style="left:292.5px;top:453.4px;" width="12" height="18" viewBox="0 0 12 18"><path d="M3 3 L9 9 L3 15" fill="none" stroke="#7d7d7d" stroke-width="2.1" stroke-linecap="round" stroke-linejoin="round"/></svg>
<div class="t" style="top:490.9px;font-size:25px;line-height:32px;color:#262626;letter-spacing:-0.057px;left:2.7px;">How to Cre...sign Boards</div>
<svg class="b" style="left:292.5px;top:497.4px;" width="12" height="18" viewBox="0 0 12 18"><path d="M3 3 L9 9 L3 15" fill="none" stroke="#7d7d7d" stroke-width="2.1" stroke-linecap="round" stroke-linejoin="round"/></svg>
<div class="t" style="top:534.9px;font-size:25px;line-height:32px;color:#262626;letter-spacing:-0.213px;left:2.7px;">How to Des...Love Part 1</div>
<svg class="b" style="left:292.5px;top:541.4px;" width="12" height="18" viewBox="0 0 12 18"><path d="M3 3 L9 9 L3 15" fill="none" stroke="#7d7d7d" stroke-width="2.1" stroke-linecap="round" stroke-linejoin="round"/></svg>
<div class="t" style="top:578.9px;font-size:25px;line-height:32px;color:#262626;letter-spacing:-0.260px;left:2.7px;">How to Ma...om in 1 Day</div>
<svg class="b" style="left:292.5px;top:585.4px;" width="12" height="18" viewBox="0 0 12 18"><path d="M3 3 L9 9 L3 15" fill="none" stroke="#7d7d7d" stroke-width="2.1" stroke-linecap="round" stroke-linejoin="round"/></svg>
<div class="t" style="top:622.9px;font-size:25px;line-height:32px;color:#262626;letter-spacing:-0.133px;left:2.7px;">How to Mix...s Like a Pro</div>
<svg class="b" style="left:292.5px;top:629.4px;" width="12" height="18" viewBox="0 0 12 18"><path d="M3 3 L9 9 L3 15" fill="none" stroke="#7d7d7d" stroke-width="2.1" stroke-linecap="round" stroke-linejoin="round"/></svg>
<div class="t" style="top:666.9px;font-size:25px;line-height:32px;color:#262626;letter-spacing:-0.104px;left:2.7px;">How to Re...from Images</div>
<svg class="b" style="left:292.5px;top:673.4px;" width="12" height="18" viewBox="0 0 12 18"><path d="M3 3 L9 9 L3 15" fill="none" stroke="#7d7d7d" stroke-width="2.1" stroke-linecap="round" stroke-linejoin="round"/></svg>
<div class="t" style="top:710.9px;font-size:25px;line-height:32px;color:#262626;letter-spacing:-0.057px;left:2.7px;">Painted Cei...Get It Right</div>
<svg class="b" style="left:292.5px;top:717.4px;" width="12" height="18" viewBox="0 0 12 18"><path d="M3 3 L9 9 L3 15" fill="none" stroke="#7d7d7d" stroke-width="2.1" stroke-linecap="round" stroke-linejoin="round"/></svg>
<div class="b" style="left:358px;top:442px;width:368px;height:43.5px;background:#dcdcdc;border-radius:9px;"></div>
<svg class="b" style="left:371px;top:405.09999999999997px;" width="30" height="28" viewBox="0 0 30 28"><defs><linearGradient id="fg" x1="0" y1="0" x2="0" y2="1"><stop offset="0" stop-color="#86c6f5"/><stop offset="1" stop-color="#6fb8ef"/></linearGradient></defs>
<path d="M0.5 3 a2.2 2.2 0 0 1 2.2 -2.2 H10 c1.6 0 2 0.6 3 1.8 l0.8 0.9 H27 a2.2 2.2 0 0 1 2.2 2.2 V10 H0.5 Z" fill="#4d93dc"/>
<rect x="0.5" y="6.2" width="28.8" height="20.6" rx="2.2" fill="url(#fg)"/>
<rect x="0.5" y="23.6" width="28.8" height="1.2" fill="#5ba6e6" opacity="0.8"/>
<path d="M0.5 24.6 V24.8 a2.2 2.2 0 0 0 2.2 2.2 H27.1 a2.2 2.2 0 0 0 2.2 -2.2 V24.6 Z" fill="#5aa5e6"/></svg>
<div class="t" style="top:402.9px;font-size:25px;line-height:32px;color:#262626;letter-spacing:-0.157px;left:412.8px;">Blog Images</div>
<svg class="b" style="left:702.4px;top:409.4px;" width="12" height="18" viewBox="0 0 12 18"><path d="M3 3 L9 9 L3 15" fill="none" stroke="#7d7d7d" stroke-width="2.1" stroke-linecap="round" stroke-linejoin="round"/></svg>
<svg class="b" style="left:371px;top:449.09999999999997px;" width="30" height="28" viewBox="0 0 30 28"><defs><linearGradient id="fg" x1="0" y1="0" x2="0" y2="1"><stop offset="0" stop-color="#86c6f5"/><stop offset="1" stop-color="#6fb8ef"/></linearGradient></defs>
<path d="M0.5 3 a2.2 2.2 0 0 1 2.2 -2.2 H10 c1.6 0 2 0.6 3 1.8 l0.8 0.9 H27 a2.2 2.2 0 0 1 2.2 2.2 V10 H0.5 Z" fill="#4d93dc"/>
<rect x="0.5" y="6.2" width="28.8" height="20.6" rx="2.2" fill="url(#fg)"/>
<rect x="0.5" y="23.6" width="28.8" height="1.2" fill="#5ba6e6" opacity="0.8"/>
<path d="M0.5 24.6 V24.8 a2.2 2.2 0 0 0 2.2 2.2 H27.1 a2.2 2.2 0 0 0 2.2 -2.2 V24.6 Z" fill="#5aa5e6"/></svg>
<div class="t" style="top:446.9px;font-size:25px;line-height:32px;color:#262626;letter-spacing:-0.145px;left:412.8px;">Design Board Images</div>
<svg class="b" style="left:702.4px;top:453.4px;" width="12" height="18" viewBox="0 0 12 18"><path d="M3 3 L9 9 L3 15" fill="none" stroke="#7d7d7d" stroke-width="2.1" stroke-linecap="round" stroke-linejoin="round"/></svg>
<svg class="b" style="left:371px;top:493.09999999999997px;" width="30" height="28" viewBox="0 0 30 28"><defs><linearGradient id="fg" x1="0" y1="0" x2="0" y2="1"><stop offset="0" stop-color="#86c6f5"/><stop offset="1" stop-color="#6fb8ef"/></linearGradient></defs>
<path d="M0.5 3 a2.2 2.2 0 0 1 2.2 -2.2 H10 c1.6 0 2 0.6 3 1.8 l0.8 0.9 H27 a2.2 2.2 0 0 1 2.2 2.2 V10 H0.5 Z" fill="#4d93dc"/>
<rect x="0.5" y="6.2" width="28.8" height="20.6" rx="2.2" fill="url(#fg)"/>
<rect x="0.5" y="23.6" width="28.8" height="1.2" fill="#5ba6e6" opacity="0.8"/>
<path d="M0.5 24.6 V24.8 a2.2 2.2 0 0 0 2.2 2.2 H27.1 a2.2 2.2 0 0 0 2.2 -2.2 V24.6 Z" fill="#5aa5e6"/></svg>
<div class="t" style="top:490.9px;font-size:25px;line-height:32px;color:#262626;letter-spacing:-0.307px;left:412.8px;">Design Board PNGs</div>
<svg class="b" style="left:702.4px;top:497.4px;" width="12" height="18" viewBox="0 0 12 18"><path d="M3 3 L9 9 L3 15" fill="none" stroke="#7d7d7d" stroke-width="2.1" stroke-linecap="round" stroke-linejoin="round"/></svg>
<svg class="b" style="left:371px;top:537.1px;" width="30" height="28" viewBox="0 0 30 28"><defs><linearGradient id="fg" x1="0" y1="0" x2="0" y2="1"><stop offset="0" stop-color="#86c6f5"/><stop offset="1" stop-color="#6fb8ef"/></linearGradient></defs>
<path d="M0.5 3 a2.2 2.2 0 0 1 2.2 -2.2 H10 c1.6 0 2 0.6 3 1.8 l0.8 0.9 H27 a2.2 2.2 0 0 1 2.2 2.2 V10 H0.5 Z" fill="#4d93dc"/>
<rect x="0.5" y="6.2" width="28.8" height="20.6" rx="2.2" fill="url(#fg)"/>
<rect x="0.5" y="23.6" width="28.8" height="1.2" fill="#5ba6e6" opacity="0.8"/>
<path d="M0.5 24.6 V24.8 a2.2 2.2 0 0 0 2.2 2.2 H27.1 a2.2 2.2 0 0 0 2.2 -2.2 V24.6 Z" fill="#5aa5e6"/></svg>
<div class="t" style="top:534.9px;font-size:25px;line-height:32px;color:#262626;letter-spacing:-0.113px;left:412.8px;">Design Boa...Video Clips</div>
<svg class="b" style="left:702.4px;top:541.4px;" width="12" height="18" viewBox="0 0 12 18"><path d="M3 3 L9 9 L3 15" fill="none" stroke="#7d7d7d" stroke-width="2.1" stroke-linecap="round" stroke-linejoin="round"/></svg>
<div class="b" style="left:768px;top:618px;width:367px;height:43.5px;background:#dcdcdc;border-radius:9px;"></div>
<svg class="b" style="left:781.5px;top:405.09999999999997px;" width="30" height="28" viewBox="0 0 30 28"><defs><linearGradient id="fg" x1="0" y1="0" x2="0" y2="1"><stop offset="0" stop-color="#86c6f5"/><stop offset="1" stop-color="#6fb8ef"/></linearGradient></defs>
<path d="M0.5 3 a2.2 2.2 0 0 1 2.2 -2.2 H10 c1.6 0 2 0.6 3 1.8 l0.8 0.9 H27 a2.2 2.2 0 0 1 2.2 2.2 V10 H0.5 Z" fill="#4d93dc"/>
<rect x="0.5" y="6.2" width="28.8" height="20.6" rx="2.2" fill="url(#fg)"/>
<rect x="0.5" y="23.6" width="28.8" height="1.2" fill="#5ba6e6" opacity="0.8"/>
<path d="M0.5 24.6 V24.8 a2.2 2.2 0 0 0 2.2 2.2 H27.1 a2.2 2.2 0 0 0 2.2 -2.2 V24.6 Z" fill="#5aa5e6"/></svg>
<div class="t" style="top:402.9px;font-size:25px;line-height:32px;color:#262626;letter-spacing:1.273px;left:822.7px;">Art</div>
<svg class="b" style="left:1111.8px;top:409.4px;" width="12" height="18" viewBox="0 0 12 18"><path d="M3 3 L9 9 L3 15" fill="none" stroke="#7d7d7d" stroke-width="2.1" stroke-linecap="round" stroke-linejoin="round"/></svg>
<svg class="b" style="left:781.5px;top:449.09999999999997px;" width="30" height="28" viewBox="0 0 30 28"><defs><linearGradient id="fg" x1="0" y1="0" x2="0" y2="1"><stop offset="0" stop-color="#86c6f5"/><stop offset="1" stop-color="#6fb8ef"/></linearGradient></defs>
<path d="M0.5 3 a2.2 2.2 0 0 1 2.2 -2.2 H10 c1.6 0 2 0.6 3 1.8 l0.8 0.9 H27 a2.2 2.2 0 0 1 2.2 2.2 V10 H0.5 Z" fill="#4d93dc"/>
<rect x="0.5" y="6.2" width="28.8" height="20.6" rx="2.2" fill="url(#fg)"/>
<rect x="0.5" y="23.6" width="28.8" height="1.2" fill="#5ba6e6" opacity="0.8"/>
<path d="M0.5 24.6 V24.8 a2.2 2.2 0 0 0 2.2 2.2 H27.1 a2.2 2.2 0 0 0 2.2 -2.2 V24.6 Z" fill="#5aa5e6"/></svg>
<div class="t" style="top:446.9px;font-size:25px;line-height:32px;color:#262626;letter-spacing:0.119px;left:822.7px;">Furniture</div>
<svg class="b" style="left:1111.8px;top:453.4px;" width="12" height="18" viewBox="0 0 12 18"><path d="M3 3 L9 9 L3 15" fill="none" stroke="#7d7d7d" stroke-width="2.1" stroke-linecap="round" stroke-linejoin="round"/></svg>
<svg class="b" style="left:781.5px;top:493.09999999999997px;" width="30" height="28" viewBox="0 0 30 28"><defs><linearGradient id="fg" x1="0" y1="0" x2="0" y2="1"><stop offset="0" stop-color="#86c6f5"/><stop offset="1" stop-color="#6fb8ef"/></linearGradient></defs>
<path d="M0.5 3 a2.2 2.2 0 0 1 2.2 -2.2 H10 c1.6 0 2 0.6 3 1.8 l0.8 0.9 H27 a2.2 2.2 0 0 1 2.2 2.2 V10 H0.5 Z" fill="#4d93dc"/>
<rect x="0.5" y="6.2" width="28.8" height="20.6" rx="2.2" fill="url(#fg)"/>
<rect x="0.5" y="23.6" width="28.8" height="1.2" fill="#5ba6e6" opacity="0.8"/>
<path d="M0.5 24.6 V24.8 a2.2 2.2 0 0 0 2.2 2.2 H27.1 a2.2 2.2 0 0 0 2.2 -2.2 V24.6 Z" fill="#5aa5e6"/></svg>
<div class="t" style="top:490.9px;font-size:25px;line-height:32px;color:#262626;letter-spacing:0.264px;left:822.7px;">Inspiration</div>
<svg class="b" style="left:1111.8px;top:497.4px;" width="12" height="18" viewBox="0 0 12 18"><path d="M3 3 L9 9 L3 15" fill="none" stroke="#7d7d7d" stroke-width="2.1" stroke-linecap="round" stroke-linejoin="round"/></svg>
<svg class="b" style="left:781.5px;top:537.1px;" width="30" height="28" viewBox="0 0 30 28"><defs><linearGradient id="fg" x1="0" y1="0" x2="0" y2="1"><stop offset="0" stop-color="#86c6f5"/><stop offset="1" stop-color="#6fb8ef"/></linearGradient></defs>
<path d="M0.5 3 a2.2 2.2 0 0 1 2.2 -2.2 H10 c1.6 0 2 0.6 3 1.8 l0.8 0.9 H27 a2.2 2.2 0 0 1 2.2 2.2 V10 H0.5 Z" fill="#4d93dc"/>
<rect x="0.5" y="6.2" width="28.8" height="20.6" rx="2.2" fill="url(#fg)"/>
<rect x="0.5" y="23.6" width="28.8" height="1.2" fill="#5ba6e6" opacity="0.8"/>
<path d="M0.5 24.6 V24.8 a2.2 2.2 0 0 0 2.2 2.2 H27.1 a2.2 2.2 0 0 0 2.2 -2.2 V24.6 Z" fill="#5aa5e6"/></svg>
<div class="t" style="top:534.9px;font-size:25px;line-height:32px;color:#262626;letter-spacing:-0.387px;left:822.7px;">Lamps</div>
<svg class="b" style="left:1111.8px;top:541.4px;" width="12" height="18" viewBox="0 0 12 18"><path d="M3 3 L9 9 L3 15" fill="none" stroke="#7d7d7d" stroke-width="2.1" stroke-linecap="round" stroke-linejoin="round"/></svg>
<svg class="b" style="left:781.5px;top:581.1px;" width="30" height="28" viewBox="0 0 30 28"><defs><linearGradient id="fg" x1="0" y1="0" x2="0" y2="1"><stop offset="0" stop-color="#86c6f5"/><stop offset="1" stop-color="#6fb8ef"/></linearGradient></defs>
<path d="M0.5 3 a2.2 2.2 0 0 1 2.2 -2.2 H10 c1.6 0 2 0.6 3 1.8 l0.8 0.9 H27 a2.2 2.2 0 0 1 2.2 2.2 V10 H0.5 Z" fill="#4d93dc"/>
<rect x="0.5" y="6.2" width="28.8" height="20.6" rx="2.2" fill="url(#fg)"/>
<rect x="0.5" y="23.6" width="28.8" height="1.2" fill="#5ba6e6" opacity="0.8"/>
<path d="M0.5 24.6 V24.8 a2.2 2.2 0 0 0 2.2 2.2 H27.1 a2.2 2.2 0 0 0 2.2 -2.2 V24.6 Z" fill="#5aa5e6"/></svg>
<div class="t" style="top:578.9px;font-size:25px;line-height:32px;color:#262626;letter-spacing:0.161px;left:822.7px;">Textiles</div>
<svg class="b" style="left:1111.8px;top:585.4px;" width="12" height="18" viewBox="0 0 12 18"><path d="M3 3 L9 9 L3 15" fill="none" stroke="#7d7d7d" stroke-width="2.1" stroke-linecap="round" stroke-linejoin="round"/></svg>
<svg class="b" style="left:781.5px;top:625.1px;" width="30" height="28" viewBox="0 0 30 28"><defs><linearGradient id="fg" x1="0" y1="0" x2="0" y2="1"><stop offset="0" stop-color="#86c6f5"/><stop offset="1" stop-color="#6fb8ef"/></linearGradient></defs>
<path d="M0.5 3 a2.2 2.2 0 0 1 2.2 -2.2 H10 c1.6 0 2 0.6 3 1.8 l0.8 0.9 H27 a2.2 2.2 0 0 1 2.2 2.2 V10 H0.5 Z" fill="#4d93dc"/>
<rect x="0.5" y="6.2" width="28.8" height="20.6" rx="2.2" fill="url(#fg)"/>
<rect x="0.5" y="23.6" width="28.8" height="1.2" fill="#5ba6e6" opacity="0.8"/>
<path d="M0.5 24.6 V24.8 a2.2 2.2 0 0 0 2.2 2.2 H27.1 a2.2 2.2 0 0 0 2.2 -2.2 V24.6 Z" fill="#5aa5e6"/></svg>
<div class="t" style="top:622.9px;font-size:25px;line-height:32px;color:#262626;letter-spacing:-0.422px;left:822.7px;">Walls</div>
<svg class="b" style="left:1111.8px;top:629.4px;" width="12" height="18" viewBox="0 0 12 18"><path d="M3 3 L9 9 L3 15" fill="none" stroke="#7d7d7d" stroke-width="2.1" stroke-linecap="round" stroke-linejoin="round"/></svg>
<div class="b" style="left:1178px;top:398px;width:368px;height:44px;background:#2b63d9;border-radius:9px;"></div>
<div class="b" style="left:1191.5px;top:404.2px;width:29px;height:29px;box-shadow:0 1.5px 2px rgba(0,0,0,0.28);"></div><svg class="b" style="left:1191.5px;top:404.2px;" width="29" height="29" viewBox="0 0 29 29"><rect x="0.5" y="0.5" width="28" height="28" fill="#fff" stroke="#c9c9c9" stroke-width="1"/><rect x="3" y="3" width="23" height="23" fill="#ebe9e4"/></svg>
<div class="t" style="top:402.9px;font-size:25px;line-height:32px;color:#fff;letter-spacing:-0.125px;left:1232.8px;">Screen Sho...2.40.40 PM</div>
<div class="b" style="left:1191.5px;top:448.2px;width:29px;height:29px;box-shadow:0 1.5px 2px rgba(0,0,0,0.28);"></div><svg class="b" style="left:1191.5px;top:448.2px;" width="29" height="29" viewBox="0 0 29 29"><rect x="0.5" y="0.5" width="28" height="28" fill="#fff" stroke="#c9c9c9" stroke-width="1"/><rect x="3" y="3" width="23" height="23" fill="#e9edf1"/><circle cx="8" cy="8" r="2.6" fill="#b9c4d2"/><circle cx="18" cy="7" r="2.6" fill="#b9c4d2"/><circle cx="12" cy="15" r="2.6" fill="#b9c4d2"/><circle cx="22" cy="16" r="2.6" fill="#b9c4d2"/><circle cx="8" cy="22" r="2.6" fill="#b9c4d2"/><circle cx="19" cy="23" r="2.6" fill="#b9c4d2"/></svg>
<div class="t" style="top:446.9px;font-size:25px;line-height:32px;color:#262626;letter-spacing:-0.316px;left:1232.8px;">Screen Sho...2.42.16 PM</div>
<div class="b" style="left:1191.5px;top:492.2px;width:29px;height:29px;box-shadow:0 1.5px 2px rgba(0,0,0,0.28);"></div><svg class="b" style="left:1191.5px;top:492.2px;" width="29" height="29" viewBox="0 0 29 29"><rect x="0.5" y="0.5" width="28" height="28" fill="#fff" stroke="#c9c9c9" stroke-width="1"/><rect x="3" y="3" width="23" height="23" fill="#7e9abd"/><circle cx="8" cy="8" r="3.6" fill="#e8eef5"/><circle cx="19" cy="9" r="3.6" fill="#4f6f9c"/><circle cx="12" cy="17" r="3.6" fill="#a9d0d8"/><circle cx="21" cy="20" r="3.6" fill="#e8eef5"/><circle cx="7" cy="22" r="3.6" fill="#4f6f9c"/><circle cx="15" cy="7" r="3.6" fill="#a9d0d8"/></svg>
<div class="t" style="top:490.9px;font-size:25px;line-height:32px;color:#262626;letter-spacing:-0.357px;left:1232.8px;">Screen Sho...2.56.15 PM</div>
<div class="b" style="left:1191.5px;top:536.1999999999999px;width:29px;height:29px;box-shadow:0 1.5px 2px rgba(0,0,0,0.28);"></div><svg class="b" style="left:1191.5px;top:536.1999999999999px;" width="29" height="29" viewBox="0 0 29 29"><rect x="0.5" y="0.5" width="28" height="28" fill="#fff" stroke="#c9c9c9" stroke-width="1"/><rect x="3" y="3" width="23" height="23" fill="#eeede9"/></svg>
<div class="t" style="top:534.9px;font-size:25px;line-height:32px;color:#262626;letter-spacing:-0.357px;left:1232.8px;">Screen Sho...2.56.31 PM</div>
<div class="b" style="left:1191.5px;top:580.1999999999999px;width:29px;height:29px;box-shadow:0 1.5px 2px rgba(0,0,0,0.28);"></div><svg class="b" style="left:1191.5px;top:580.1999999999999px;" width="29" height="29" viewBox="0 0 29 29"><rect x="0.5" y="0.5" width="28" height="28" fill="#fff" stroke="#c9c9c9" stroke-width="1"/><rect x="3" y="3" width="23" height="23" fill="#e3e0d9"/><ellipse cx="9" cy="9" rx="3.5" ry="4.5" fill="#f6f5f2"/><ellipse cx="20" cy="9" rx="3.5" ry="4.5" fill="#f6f5f2"/><ellipse cx="14.5" cy="17" rx="3.5" ry="4.5" fill="#f6f5f2"/><ellipse cx="9" cy="24" rx="3.5" ry="4.5" fill="#f6f5f2"/><ellipse cx="20" cy="24" rx="3.5" ry="4.5" fill="#f6f5f2"/></svg>
<div class="t" style="top:578.9px;font-size:25px;line-height:32px;color:#262626;letter-spacing:-0.197px;left:1232.8px;">Screen Sho...3.28.47 PM</div>
<div class="b" style="left:1191.5px;top:624.1999999999999px;width:29px;height:29px;box-shadow:0 1.5px 2px rgba(0,0,0,0.28);"></div><svg class="b" style="left:1191.5px;top:624.1999999999999px;" width="29" height="29" viewBox="0 0 29 29"><rect x="0.5" y="0.5" width="28" height="28" fill="#fff" stroke="#c9c9c9" stroke-width="1"/><rect x="3" y="3" width="23" height="23" fill="#7792bb"/><path d="M9 4 L13 9 L9 14 L5 9 Z" fill="#eef2f7"/><path d="M20 4 L24 9 L20 14 L16 9 Z" fill="#eef2f7"/><path d="M14.5 12 L18.5 17 L14.5 22 L10.5 17 Z" fill="#eef2f7"/><path d="M9 19 L13 24 L9 29 L5 24 Z" fill="#eef2f7"/><path d="M20 19 L24 24 L20 29 L16 24 Z" fill="#eef2f7"/><path d="M3.5 12 L7.5 17 L3.5 22 L-0.5 17 Z" fill="#eef2f7"/><path d="M25.5 12 L29.5 17 L25.5 22 L21.5 17 Z" fill="#eef2f7"/><rect x="0.5" y="0.5" width="28" height="28" fill="none" stroke="#c9c9c9"/><rect x="1" y="1" width="27" height="2" fill="#fff"/><rect x="1" y="26" width="27" height="2" fill="#fff"/><rect x="1" y="1" width="2" height="27" fill="#fff"/><rect x="26" y="1" width="2" height="27" fill="#fff"/></svg>
<div class="t" style="top:622.9px;font-size:25px;line-height:32px;color:#262626;letter-spacing:-0.357px;left:1232.8px;">Screen Sho...3.29.51 PM</div>
<div class="b" style="left:1191.5px;top:668.1999999999999px;width:29px;height:29px;box-shadow:0 1.5px 2px rgba(0,0,0,0.28);"></div><svg class="b" style="left:1191.5px;top:668.1999999999999px;" width="29" height="29" viewBox="0 0 29 29"><rect x="0.5" y="0.5" width="28" height="28" fill="#fff" stroke="#c9c9c9" stroke-width="1"/><rect x="3" y="3" width="23" height="23" fill="#8e9eb9"/></svg>
<div class="t" style="top:666.9px;font-size:25px;line-height:32px;color:#262626;letter-spacing:-0.129px;left:1232.8px;">Screen Sho...3.30.08 PM</div>
<div class="b" style="left:1191.5px;top:712.1999999999999px;width:29px;height:29px;box-shadow:0 1.5px 2px rgba(0,0,0,0.28);"></div><svg class="b" style="left:1191.5px;top:712.1999999999999px;" width="29" height="29" viewBox="0 0 29 29"><rect x="0.5" y="0.5" width="28" height="28" fill="#fff" stroke="#c9c9c9" stroke-width="1"/><rect x="3" y="3" width="23" height="23" fill="#d6d9de"/><path d="M3 8 H26 M3 14 H26 M3 20 H26 M8 3 V26 M14 3 V26 M20 3 V26" stroke="#f4f5f7" stroke-width="2.2"/></svg>
<div class="t" style="top:710.9px;font-size:25px;line-height:32px;color:#262626;letter-spacing:-0.129px;left:1232.8px;">Screen Sho...3.30.35 PM</div>
<div class="b" style="left:1191.5px;top:756.1999999999999px;width:29px;height:29px;box-shadow:0 1.5px 2px rgba(0,0,0,0.28);"></div><svg class="b" style="left:1191.5px;top:756.1999999999999px;" width="29" height="29" viewBox="0 0 29 29"><rect x="0.5" y="0.5" width="28" height="28" fill="#fff" stroke="#c9c9c9" stroke-width="1"/><rect x="3" y="3" width="23" height="23" fill="#2d3a66"/><rect x="7" y="12" width="3.5" height="1.8" fill="#dfe3ee"/><rect x="13" y="11" width="3.5" height="1.8" fill="#dfe3ee"/><rect x="19" y="13" width="3.5" height="1.8" fill="#dfe3ee"/><rect x="23" y="9" width="3.5" height="1.8" fill="#dfe3ee"/><rect x="10" y="18" width="3.5" height="1.8" fill="#dfe3ee"/><rect x="17" y="20" width="3.5" height="1.8" fill="#dfe3ee"/><rect x="22" y="22" width="3.5" height="1.8" fill="#dfe3ee"/></svg>
<div class="t" style="top:754.9px;font-size:25px;line-height:32px;color:#262626;letter-spacing:-0.129px;left:1232.8px;">Screen Sho...3.30.55 PM</div>
<div class="b" style="left:1191.5px;top:800.1999999999999px;width:29px;height:29px;box-shadow:0 1.5px 2px rgba(0,0,0,0.28);"></div><svg class="b" style="left:1191.5px;top:800.1999999999999px;" width="29" height="29" viewBox="0 0 29 29"><rect x="0.5" y="0.5" width="28" height="28" fill="#fff" stroke="#c9c9c9" stroke-width="1"/><rect x="3" y="3" width="23" height="23" fill="#e5e3de"/></svg>
<div class="t" style="top:798.9px;font-size:25px;line-height:32px;color:#262626;letter-spacing:-0.334px;left:1232.8px;">Screen Sho...3.31.42 PM</div>
<div class="b" style="left:1191.5px;top:844.1999999999999px;width:29px;height:29px;box-shadow:0 1.5px 2px rgba(0,0,0,0.28);"></div><svg class="b" style="left:1191.5px;top:844.1999999999999px;" width="29" height="29" viewBox="0 0 29 29"><rect x="0.5" y="0.5" width="28" height="28" fill="#fff" stroke="#c9c9c9" stroke-width="1"/><rect x="3" y="3" width="23" height="23" fill="#c4cbd3"/><rect x="3" y="3" width="23" height="10" fill="#cfd5dc"/></svg>
<div class="t" style="top:842.9px;font-size:25px;line-height:32px;color:#262626;letter-spacing:-0.357px;left:1232.8px;">Screen Sho...3.31.47 PM</div>
<div class="b" style="left:1191.5px;top:888.1999999999999px;width:29px;height:29px;box-shadow:0 1.5px 2px rgba(0,0,0,0.28);"></div><svg class="b" style="left:1191.5px;top:888.1999999999999px;" width="29" height="29" viewBox="0 0 29 29"><rect x="0.5" y="0.5" width="28" height="28" fill="#fff" stroke="#c9c9c9" stroke-width="1"/><rect x="3" y="3" width="23" height="23" fill="#f0f0ed"/></svg>
<div class="t" style="top:886.9px;font-size:25px;line-height:32px;color:#262626;letter-spacing:-0.129px;left:1232.8px;">Screen Sho...3.32.09 PM</div>
<div class="b" style="left:1191.5px;top:932.1999999999999px;width:29px;height:29px;box-shadow:0 1.5px 2px rgba(0,0,0,0.28);"></div><svg class="b" style="left:1191.5px;top:932.1999999999999px;" width="29" height="29" viewBox="0 0 29 29"><rect x="0.5" y="0.5" width="28" height="28" fill="#fff" stroke="#c9c9c9" stroke-width="1"/><rect x="3" y="3" width="23" height="23" fill="#eef3e4"/><rect x="6" y="3" width="2.2" height="23" fill="#dbe8c6"/><rect x="12" y="3" width="2.2" height="23" fill="#dbe8c6"/><rect x="18" y="3" width="2.2" height="23" fill="#dbe8c6"/><rect x="24" y="3" width="2.2" height="23" fill="#dbe8c6"/></svg>
<div class="t" style="top:930.9px;font-size:25px;line-height:32px;color:#262626;letter-spacing:-0.129px;left:1232.8px;">Screen Sho...3.32.45 PM</div>
<div class="b" style="left:1191.5px;top:976.1999999999999px;width:29px;height:29px;box-shadow:0 1.5px 2px rgba(0,0,0,0.28);"></div><svg class="b" style="left:1191.5px;top:976.1999999999999px;" width="29" height="29" viewBox="0 0 29 29"><rect x="0.5" y="0.5" width="28" height="28" fill="#fff" stroke="#c9c9c9" stroke-width="1"/><rect x="3" y="3" width="23" height="23" fill="#eaeae8"/></svg>
<div class="t" style="top:974.9px;font-size:25px;line-height:32px;color:#262626;letter-spacing:-0.447px;left:1232.8px;">Screen Sho...1.41.45 PM</div>
<div class="b" style="left:1617px;top:406px;width:818px;height:813px;box-sizing:border-box;background:#fff;border:1.5px solid #dadada;border-radius:10px;box-shadow:0 1px 2px rgba(0,0,0,0.12);"></div>
<svg class="b" style="left:1624px;top:412.5px;border-bottom-right-radius:9px;border-bottom-left-radius:6px;border-top-right-radius:6px;" width="810" height="805" viewBox="1624 412.5 810 805"><defs><path id="pt" vector-effect="non-scaling-stroke" d="M0 0 C2 -1.2 3.6 -5 6.8 -5 C9.4 -5 10.6 -2.4 10 0 C10.6 2.4 9.4 5 6.8 5 C3.6 5 2 1.2 0 0 Z"/><symbol id="fa" overflow="visible" viewBox="-260 -260 520 520"><use href="#pt" transform="rotate(113) translate(179) rotate(-6) scale(5.28 1.97)"/><use href="#pt" transform="rotate(145) translate(178) rotate(-19) scale(5.09 1.95)"/><use href="#pt" transform="rotate(178) translate(173) rotate(-12) scale(4.97 2.30)"/><use href="#pt" transform="rotate(216) translate(177) rotate(21) scale(5.68 2.19)"/><use href="#pt" transform="rotate(243) translate(173) rotate(-17) scale(5.56 2.06)"/><use href="#pt" transform="rotate(278) translate(180) rotate(6) scale(5.50 2.02)"/><use href="#pt" transform="rotate(312) translate(172) rotate(-13) scale(5.14 1.96)"/><use href="#pt" transform="rotate(347) translate(180) rotate(-2) scale(4.98 2.07)"/><use href="#pt" transform="rotate(376) translate(175) rotate(3) scale(5.47 2.24)"/><use href="#pt" transform="rotate(411) translate(175) rotate(21) scale(5.58 2.26)"/><use href="#pt" transform="rotate(440) translate(173) rotate(-0) scale(4.96 2.27)"/><use href="#pt" transform="rotate(16) translate(148) rotate(-8) scale(5.21 2.29)"/><use href="#pt" transform="rotate(40) translate(142) rotate(15) scale(4.99 2.29)"/><use href="#pt" transform="rotate(67) translate(137) rotate(9) scale(4.84 2.33)"/><use href="#pt" transform="rotate(88) translate(140) rotate(-5) scale(5.51 2.40)"/><use href="#pt" transform="rotate(112) translate(138) rotate(-17) scale(4.25 2.24)"/><use href="#pt" transform="rotate(130) translate(139) rotate(-5) scale(5.22 2.08)"/><use href="#pt" transform="rotate(162) translate(143) rotate(17) scale(4.33 2.23)"/><use href="#pt" transform="rotate(185) translate(142) rotate(-6) scale(5.34 2.15)"/><use href="#pt" transform="rotate(210) translate(139) rotate(-12) scale(5.47 2.09)"/><use href="#pt" transform="rotate(227) translate(140) rotate(-22) scale(4.85 2.29)"/><use href="#pt" transform="rotate(253) translate(149) rotate(8) scale(4.70 2.28)"/><use href="#pt" transform="rotate(278) translate(137) rotate(18) scale(5.02 2.34)"/><use href="#pt" transform="rotate(305) translate(141) rotate(-4) scale(5.36 2.39)"/><use href="#pt" transform="rotate(322) translate(137) rotate(-13) scale(5.05 2.05)"/><use href="#pt" transform="rotate(347) translate(136) rotate(-15) scale(4.66 2.05)"/><use href="#pt" transform="rotate(35) translate(114) rotate(-15) scale(3.90 2.53)"/><use href="#pt" transform="rotate(53) translate(109) rotate(15) scale(4.28 2.29)"/><use href="#pt" transform="rotate(79) translate(108) rotate(-18) scale(4.43 2.34)"/><use href="#pt" transform="rotate(92) translate(109) rotate(-21) scale(4.19 2.51)"/><use href="#pt" transform="rotate(117) translate(113) rotate(-21) scale(4.50 2.18)"/><use href="#pt" transform="rotate(132) translate(115) rotate(-11) scale(5.03 2.53)"/><use href="#pt" transform="rotate(149) translate(113) rotate(12) scale(4.07 2.48)"/><use href="#pt" transform="rotate(167) translate(117) rotate(16) scale(4.14 2.50)"/><use href="#pt" transform="rotate(191) translate(110) rotate(1) scale(4.84 2.47)"/><use href="#pt" transform="rotate(206) translate(110) rotate(-11) scale(3.91 2.13)"/><use href="#pt" transform="rotate(228) translate(117) rotate(21) scale(5.01 2.33)"/><use href="#pt" transform="rotate(249) translate(110) rotate(-13) scale(4.31 2.22)"/><use href="#pt" transform="rotate(261) translate(116) rotate(-1) scale(4.61 2.54)"/><use href="#pt" transform="rotate(284) translate(114) rotate(18) scale(4.82 2.15)"/><use href="#pt" transform="rotate(305) translate(109) rotate(13) scale(4.76 2.34)"/><use href="#pt" transform="rotate(319) translate(112) rotate(-4) scale(4.82 2.58)"/><use href="#pt" transform="rotate(344) translate(109) rotate(-15) scale(4.73 2.19)"/><use href="#pt" transform="rotate(363) translate(116) rotate(21) scale(4.83 2.18)"/><use href="#pt" transform="rotate(379) translate(109) rotate(-21) scale(4.29 2.38)"/><use href="#pt" transform="rotate(351) translate(88) rotate(4) scale(3.88 2.67)"/><use href="#pt" transform="rotate(370) translate(87) rotate(-3) scale(3.56 2.33)"/><use href="#pt" transform="rotate(385) translate(86) rotate(5) scale(3.61 2.41)"/><use href="#pt" transform="rotate(399) translate(92) rotate(-1) scale(3.81 2.49)"/><use href="#pt" transform="rotate(422) translate(89) rotate(-6) scale(3.86 2.47)"/><use href="#pt" transform="rotate(435) translate(91) rotate(-4) scale(3.53 2.20)"/><use href="#pt" transform="rotate(452) translate(87) rotate(0) scale(4.09 2.48)"/><use href="#pt" transform="rotate(470) translate(89) rotate(-3) scale(4.15 2.25)"/><use href="#pt" transform="rotate(484) translate(89) rotate(3) scale(4.14 2.45)"/><use href="#pt" transform="rotate(508) translate(88) rotate(0) scale(3.80 2.51)"/><use href="#pt" transform="rotate(523) translate(88) rotate(5) scale(3.81 2.47)"/><use href="#pt" transform="rotate(540) translate(87) rotate(1) scale(4.24 2.67)"/><use href="#pt" transform="rotate(560) translate(85) rotate(-1) scale(4.21 2.27)"/><use href="#pt" transform="rotate(568) translate(90) rotate(3) scale(3.59 2.24)"/><use href="#pt" transform="rotate(593) translate(90) rotate(-4) scale(3.50 2.56)"/><use href="#pt" transform="rotate(610) translate(92) rotate(-1) scale(4.34 2.31)"/><use href="#pt" transform="rotate(624) translate(86) rotate(-1) scale(4.36 2.62)"/><use href="#pt" transform="rotate(641) translate(87) rotate(3) scale(3.69 2.30)"/><use href="#pt" transform="rotate(653) translate(85) rotate(-2) scale(3.91 2.42)"/><use href="#pt" transform="rotate(676) translate(92) rotate(3) scale(3.87 2.23)"/><use href="#pt" transform="rotate(697) translate(85) rotate(3) scale(3.45 2.33)"/><use href="#pt" transform="rotate(94) translate(72) rotate(-3) scale(3.28 2.44)"/><use href="#pt" transform="rotate(112) translate(72) rotate(-5) scale(3.72 2.29)"/><use href="#pt" transform="rotate(129) translate(68) rotate(5) scale(3.52 2.22)"/><use href="#pt" transform="rotate(153) translate(73) rotate(-5) scale(3.62 2.06)"/><use href="#pt" transform="rotate(173) translate(71) rotate(5) scale(3.31 2.18)"/><use href="#pt" transform="rotate(185) translate(69) rotate(-5) scale(3.02 2.27)"/><use href="#pt" transform="rotate(202) translate(69) rotate(-2) scale(2.95 2.12)"/><use href="#pt" transform="rotate(226) translate(68) rotate(-2) scale(3.16 2.25)"/><use href="#pt" transform="rotate(237) translate(72) rotate(1) scale(3.13 2.03)"/><use href="#pt" transform="rotate(256) translate(68) rotate(4) scale(3.33 2.45)"/><use href="#pt" transform="rotate(277) translate(70) rotate(0) scale(3.35 2.41)"/><use href="#pt" transform="rotate(297) translate(72) rotate(2) scale(3.78 2.18)"/><use href="#pt" transform="rotate(315) translate(68) rotate(-4) scale(3.26 2.18)"/><use href="#pt" transform="rotate(327) translate(68) rotate(-5) scale(3.56 2.14)"/><use href="#pt" transform="rotate(353) translate(69) rotate(-3) scale(3.68 2.33)"/><use href="#pt" transform="rotate(365) translate(70) rotate(-3) scale(3.31 2.10)"/><use href="#pt" transform="rotate(390) translate(69) rotate(6) scale(3.77 2.28)"/><use href="#pt" transform="rotate(401) translate(70) rotate(-0) scale(3.22 2.02)"/><use href="#pt" transform="rotate(421) translate(67) rotate(-3) scale(3.08 2.26)"/><use href="#pt" transform="rotate(435) translate(67) rotate(-2) scale(3.26 2.04)"/><use href="#pt" transform="rotate(85) translate(55) rotate(3) scale(2.86 2.06)"/><use href="#pt" transform="rotate(108) translate(57) rotate(-4) scale(2.76 1.89)"/><use href="#pt" transform="rotate(126) translate(56) rotate(5) scale(2.95 1.78)"/><use href="#pt" transform="rotate(145) translate(53) rotate(0) scale(3.02 2.08)"/><use href="#pt" transform="rotate(164) translate(56) rotate(1) scale(3.10 2.08)"/><use href="#pt" transform="rotate(188) translate(53) rotate(-6) scale(2.98 2.04)"/><use href="#pt" transform="rotate(200) translate(56) rotate(1) scale(2.74 1.80)"/><use href="#pt" transform="rotate(225) translate(54) rotate(-6) scale(2.94 2.03)"/><use href="#pt" transform="rotate(247) translate(54) rotate(2) scale(3.03 1.96)"/><use href="#pt" transform="rotate(259) translate(52) rotate(-3) scale(3.02 1.86)"/><use href="#pt" transform="rotate(286) translate(57) rotate(-0) scale(2.62 2.06)"/><use href="#pt" transform="rotate(303) translate(56) rotate(1) scale(2.83 2.03)"/><use href="#pt" transform="rotate(325) translate(53) rotate(3) scale(2.52 1.82)"/><use href="#pt" transform="rotate(342) translate(52) rotate(-3) scale(2.89 1.76)"/><use href="#pt" transform="rotate(366) translate(53) rotate(0) scale(2.99 2.03)"/><use href="#pt" transform="rotate(383) translate(56) rotate(-4) scale(2.82 1.81)"/><use href="#pt" transform="rotate(409) translate(54) rotate(4) scale(3.17 1.77)"/><use href="#pt" transform="rotate(428) translate(53) rotate(5) scale(2.80 1.87)"/><use href="#pt" transform="rotate(77) translate(42) rotate(-4) scale(2.11 1.67)"/><use href="#pt" transform="rotate(102) translate(41) rotate(-3) scale(2.34 1.80)"/><use href="#pt" transform="rotate(125) translate(38) rotate(-0) scale(2.33 1.50)"/><use href="#pt" transform="rotate(143) translate(40) rotate(-2) scale(2.21 1.54)"/><use href="#pt" transform="rotate(169) translate(41) rotate(-5) scale(2.03 1.75)"/><use href="#pt" transform="rotate(193) translate(39) rotate(-2) scale(2.47 1.80)"/><use href="#pt" transform="rotate(210) translate(40) rotate(-1) scale(2.64 1.70)"/><use href="#pt" transform="rotate(231) translate(41) rotate(-3) scale(2.05 1.53)"/><use href="#pt" transform="rotate(260) translate(40) rotate(-4) scale(2.18 1.59)"/><use href="#pt" transform="rotate(277) translate(41) rotate(2) scale(2.62 1.80)"/><use href="#pt" transform="rotate(305) translate(41) rotate(-5) scale(2.61 1.68)"/><use href="#pt" transform="rotate(326) translate(41) rotate(-3) scale(2.30 1.75)"/><use href="#pt" transform="rotate(341) translate(40) rotate(-2) scale(2.60 1.54)"/><use href="#pt" transform="rotate(366) translate(39) rotate(2) scale(2.48 1.83)"/><use href="#pt" transform="rotate(389) translate(39) rotate(-4) scale(2.37 1.63)"/><use href="#pt" transform="rotate(410) translate(39) rotate(5) scale(2.59 1.67)"/><use href="#pt" transform="rotate(358) translate(27) rotate(-2) scale(1.74 1.29)"/><use href="#pt" transform="rotate(380) translate(28) rotate(5) scale(1.79 1.30)"/><use href="#pt" transform="rotate(413) translate(28) rotate(-1) scale(1.88 1.35)"/><use href="#pt" transform="rotate(434) translate(29) rotate(-4) scale(1.70 1.31)"/><use href="#pt" transform="rotate(462) translate(27) rotate(-3) scale(1.99 1.47)"/><use href="#pt" transform="rotate(485) translate(29) rotate(4) scale(1.88 1.36)"/><use href="#pt" transform="rotate(517) translate(29) rotate(5) scale(1.68 1.24)"/><use href="#pt" transform="rotate(538) translate(28) rotate(5) scale(1.97 1.23)"/><use href="#pt" transform="rotate(568) translate(28) rotate(-5) scale(2.11 1.50)"/><use href="#pt" transform="rotate(587) translate(29) rotate(3) scale(1.94 1.42)"/><use href="#pt" transform="rotate(617) translate(28) rotate(-6) scale(2.06 1.36)"/><use href="#pt" transform="rotate(644) translate(29) rotate(-2) scale(1.79 1.49)"/><use href="#pt" transform="rotate(664) translate(29) rotate(-5) scale(1.80 1.41)"/><use href="#pt" transform="rotate(689) translate(28) rotate(-3) scale(1.94 1.40)"/><use href="#pt" transform="rotate(211) translate(19) rotate(2) scale(1.44 1.07)"/><use href="#pt" transform="rotate(250) translate(18) rotate(6) scale(1.51 1.02)"/><use href="#pt" transform="rotate(278) translate(18) rotate(2) scale(1.44 0.97)"/><use href="#pt" transform="rotate(306) translate(19) rotate(-3) scale(1.42 1.11)"/><use href="#pt" transform="rotate(332) translate(18) rotate(-4) scale(1.46 1.06)"/><use href="#pt" transform="rotate(369) translate(18) rotate(6) scale(1.62 1.08)"/><use href="#pt" transform="rotate(394) translate(18) rotate(3) scale(1.65 1.02)"/><use href="#pt" transform="rotate(424) translate(18) rotate(-3) scale(1.71 1.08)"/><use href="#pt" transform="rotate(456) translate(18) rotate(-1) scale(1.59 1.18)"/><use href="#pt" transform="rotate(484) translate(17) rotate(-5) scale(1.71 1.00)"/><use href="#pt" transform="rotate(515) translate(18) rotate(6) scale(1.68 1.16)"/><use href="#pt" transform="rotate(551) translate(19) rotate(3) scale(1.45 1.01)"/><use href="#pt" transform="rotate(13) translate(10) rotate(-4) scale(1.18 0.81)"/><use href="#pt" transform="rotate(47) translate(10) rotate(-5) scale(1.15 0.81)"/><use href="#pt" transform="rotate(96) translate(10) rotate(4) scale(1.12 0.81)"/><use href="#pt" transform="rotate(131) translate(10) rotate(5) scale(1.07 0.83)"/><use href="#pt" transform="rotate(168) translate(10) rotate(-1) scale(1.17 0.90)"/><use href="#pt" transform="rotate(215) translate(10) rotate(-5) scale(1.30 0.75)"/><use href="#pt" transform="rotate(256) translate(10) rotate(-2) scale(1.14 0.88)"/><use href="#pt" transform="rotate(289) translate(10) rotate(3) scale(1.37 0.85)"/><use href="#pt" transform="rotate(330) translate(10) rotate(5) scale(1.15 0.75)"/><use href="#pt" transform="rotate(233) translate(4) rotate(5) scale(0.80 0.60)"/><use href="#pt" transform="rotate(293) translate(4) rotate(-0) scale(0.89 0.60)"/><use href="#pt" transform="rotate(353) translate(4) rotate(4) scale(0.84 0.68)"/><use href="#pt" transform="rotate(411) translate(4) rotate(-2) scale(0.94 0.61)"/><use href="#pt" transform="rotate(471) translate(4) rotate(-3) scale(0.81 0.60)"/><use href="#pt" transform="rotate(524) translate(4) rotate(6) scale(0.80 0.64)"/></symbol><symbol id="fb" overflow="visible" viewBox="-260 -260 520 520"><use href="#pt" transform="rotate(247) translate(177) rotate(22) scale(5.10 2.16)"/><use href="#pt" transform="rotate(274) translate(175) rotate(-8) scale(4.60 2.05)"/><use href="#pt" transform="rotate(307) translate(176) rotate(3) scale(4.55 2.08)"/><use href="#pt" transform="rotate(339) translate(180) rotate(-5) scale(4.50 2.03)"/><use href="#pt" transform="rotate(377) translate(172) rotate(10) scale(5.48 2.12)"/><use href="#pt" transform="rotate(410) translate(176) rotate(18) scale(4.93 2.23)"/><use href="#pt" transform="rotate(443) translate(175) rotate(2) scale(5.47 2.36)"/><use href="#pt" transform="rotate(475) translate(173) rotate(6) scale(5.48 2.11)"/><use href="#pt" transform="rotate(502) translate(178) rotate(-1) scale(5.35 1.94)"/><use href="#pt" transform="rotate(535) translate(177) rotate(17) scale(5.05 2.16)"/><use href="#pt" transform="rotate(575) translate(171) rotate(-5) scale(5.60 2.04)"/><use href="#pt" transform="rotate(43) translate(140) rotate(-4) scale(4.56 2.08)"/><use href="#pt" transform="rotate(67) translate(145) rotate(-20) scale(4.82 2.16)"/><use href="#pt" transform="rotate(86) translate(138) rotate(-19) scale(5.11 2.37)"/><use href="#pt" transform="rotate(113) translate(142) rotate(-10) scale(5.07 2.03)"/><use href="#pt" transform="rotate(133) translate(142) rotate(-17) scale(4.45 2.16)"/><use href="#pt" transform="rotate(162) translate(137) rotate(7) scale(5.36 2.34)"/><use href="#pt" transform="rotate(186) translate(145) rotate(20) scale(4.24 2.20)"/><use href="#pt" transform="rotate(213) translate(149) rotate(-13) scale(4.96 2.29)"/><use href="#pt" transform="rotate(233) translate(145) rotate(-13) scale(4.30 2.38)"/><use href="#pt" transform="rotate(254) translate(138) rotate(-8) scale(4.90 2.37)"/><use href="#pt" transform="rotate(281) translate(146) rotate(20) scale(4.56 2.43)"/><use href="#pt" transform="rotate(306) translate(143) rotate(-3) scale(5.11 2.16)"/><use href="#pt" transform="rotate(329) translate(138) rotate(-2) scale(4.30 2.41)"/><use href="#pt" transform="rotate(357) translate(140) rotate(-1) scale(4.89 2.42)"/><use href="#pt" transform="rotate(376) translate(142) rotate(15) scale(4.64 2.19)"/><use href="#pt" transform="rotate(345) translate(112) rotate(-20) scale(4.67 2.37)"/><use href="#pt" transform="rotate(367) translate(114) rotate(-6) scale(4.25 2.29)"/><use href="#pt" transform="rotate(385) translate(111) rotate(21) scale(4.20 2.58)"/><use href="#pt" transform="rotate(403) translate(115) rotate(1) scale(4.66 2.38)"/><use href="#pt" transform="rotate(429) translate(114) rotate(5) scale(4.57 2.13)"/><use href="#pt" transform="rotate(442) translate(110) rotate(-15) scale(4.74 2.51)"/><use href="#pt" transform="rotate(461) translate(108) rotate(-2) scale(4.57 2.33)"/><use href="#pt" transform="rotate(483) translate(115) rotate(8) scale(4.56 2.28)"/><use href="#pt" transform="rotate(499) translate(110) rotate(-2) scale(4.28 2.56)"/><use href="#pt" transform="rotate(518) translate(109) rotate(-14) scale(4.56 2.49)"/><use href="#pt" transform="rotate(535) translate(112) rotate(20) scale(4.02 2.36)"/><use href="#pt" transform="rotate(557) translate(110) rotate(-8) scale(4.50 2.12)"/><use href="#pt" transform="rotate(574) translate(109) rotate(2) scale(4.81 2.31)"/><use href="#pt" transform="rotate(592) translate(108) rotate(11) scale(4.09 2.40)"/><use href="#pt" transform="rotate(614) translate(117) rotate(10) scale(3.95 2.44)"/><use href="#pt" transform="rotate(637) translate(112) rotate(11) scale(4.99 2.24)"/><use href="#pt" transform="rotate(652) translate(108) rotate(-18) scale(5.02 2.32)"/><use href="#pt" transform="rotate(671) translate(118) rotate(19) scale(3.89 2.40)"/><use href="#pt" transform="rotate(695) translate(108) rotate(19) scale(4.17 2.20)"/><use href="#pt" transform="rotate(5) translate(89) rotate(-5) scale(4.03 2.67)"/><use href="#pt" transform="rotate(22) translate(87) rotate(6) scale(4.18 2.54)"/><use href="#pt" transform="rotate(41) translate(85) rotate(-2) scale(3.50 2.68)"/><use href="#pt" transform="rotate(58) translate(86) rotate(2) scale(4.00 2.44)"/><use href="#pt" transform="rotate(74) translate(86) rotate(1) scale(4.35 2.59)"/><use href="#pt" transform="rotate(93) translate(86) rotate(-0) scale(3.93 2.36)"/><use href="#pt" transform="rotate(108) translate(86) rotate(1) scale(4.36 2.59)"/><use href="#pt" transform="rotate(126) translate(90) rotate(-5) scale(3.52 2.39)"/><use href="#pt" transform="rotate(151) translate(88) rotate(5) scale(3.60 2.28)"/><use href="#pt" transform="rotate(163) translate(89) rotate(-2) scale(3.89 2.69)"/><use href="#pt" transform="rotate(178) translate(89) rotate(-4) scale(3.88 2.52)"/><use href="#pt" transform="rotate(193) translate(91) rotate(4) scale(4.33 2.54)"/><use href="#pt" transform="rotate(214) translate(92) rotate(-5) scale(3.54 2.68)"/><use href="#pt" transform="rotate(234) translate(89) rotate(2) scale(3.86 2.21)"/><use href="#pt" transform="rotate(249) translate(90) rotate(-3) scale(3.61 2.64)"/><use href="#pt" transform="rotate(269) translate(89) rotate(-5) scale(4.28 2.39)"/><use href="#pt" transform="rotate(280) translate(92) rotate(-4) scale(4.22 2.68)"/><use href="#pt" transform="rotate(303) translate(92) rotate(-5) scale(3.75 2.31)"/><use href="#pt" transform="rotate(314) translate(88) rotate(2) scale(3.70 2.27)"/><use href="#pt" transform="rotate(335) translate(86) rotate(1) scale(4.29 2.44)"/><use href="#pt" transform="rotate(347) translate(88) rotate(-1) scale(4.02 2.28)"/><use href="#pt" transform="rotate(331) translate(70) rotate(-1) scale(3.16 2.18)"/><use href="#pt" transform="rotate(358) translate(71) rotate(4) scale(3.73 2.46)"/><use href="#pt" transform="rotate(371) translate(68) rotate(3) scale(3.08 2.10)"/><use href="#pt" transform="rotate(390) translate(68) rotate(0) scale(2.93 2.16)"/><use href="#pt" transform="rotate(405) translate(70) rotate(-1) scale(3.33 2.19)"/><use href="#pt" transform="rotate(428) translate(71) rotate(3) scale(2.97 2.37)"/><use href="#pt" transform="rotate(439) translate(73) rotate(-3) scale(3.16 2.44)"/><use href="#pt" transform="rotate(460) translate(73) rotate(0) scale(3.20 2.17)"/><use href="#pt" transform="rotate(478) translate(73) rotate(2) scale(3.71 2.32)"/><use href="#pt" transform="rotate(496) translate(70) rotate(1) scale(2.97 2.25)"/><use href="#pt" transform="rotate(518) translate(72) rotate(5) scale(3.23 2.28)"/><use href="#pt" transform="rotate(536) translate(71) rotate(-2) scale(3.14 2.40)"/><use href="#pt" transform="rotate(551) translate(69) rotate(-0) scale(3.61 2.40)"/><use href="#pt" transform="rotate(570) translate(72) rotate(1) scale(3.06 2.38)"/><use href="#pt" transform="rotate(591) translate(73) rotate(1) scale(3.19 2.15)"/><use href="#pt" transform="rotate(600) translate(72) rotate(6) scale(3.29 2.17)"/><use href="#pt" transform="rotate(619) translate(68) rotate(-1) scale(3.51 2.42)"/><use href="#pt" transform="rotate(636) translate(72) rotate(-3) scale(3.22 2.29)"/><use href="#pt" transform="rotate(660) translate(70) rotate(4) scale(3.40 2.19)"/><use href="#pt" transform="rotate(680) translate(70) rotate(-0) scale(3.28 2.39)"/><use href="#pt" transform="rotate(82) translate(54) rotate(-2) scale(2.51 2.10)"/><use href="#pt" transform="rotate(105) translate(56) rotate(1) scale(2.98 1.94)"/><use href="#pt" transform="rotate(125) translate(56) rotate(-1) scale(2.66 2.07)"/><use href="#pt" transform="rotate(144) translate(56) rotate(-5) scale(3.20 2.00)"/><use href="#pt" transform="rotate(158) translate(53) rotate(4) scale(3.09 2.07)"/><use href="#pt" transform="rotate(178) translate(54) rotate(-2) scale(3.11 2.13)"/><use href="#pt" transform="rotate(204) translate(54) rotate(2) scale(3.12 1.82)"/><use href="#pt" transform="rotate(224) translate(55) rotate(4) scale(2.48 2.08)"/><use href="#pt" transform="rotate(238) translate(56) rotate(-1) scale(2.78 2.01)"/><use href="#pt" transform="rotate(266) translate(57) rotate(-5) scale(2.86 2.13)"/><use href="#pt" transform="rotate(279) translate(55) rotate(1) scale(2.70 1.97)"/><use href="#pt" transform="rotate(300) translate(57) rotate(-4) scale(2.60 1.93)"/><use href="#pt" transform="rotate(318) translate(56) rotate(-0) scale(2.87 1.83)"/><use href="#pt" transform="rotate(337) translate(55) rotate(-3) scale(2.82 2.04)"/><use href="#pt" transform="rotate(366) translate(53) rotate(5) scale(2.55 1.77)"/><use href="#pt" transform="rotate(382) translate(54) rotate(-1) scale(2.96 1.91)"/><use href="#pt" transform="rotate(399) translate(56) rotate(3) scale(2.91 1.89)"/><use href="#pt" transform="rotate(419) translate(56) rotate(-1) scale(3.17 1.81)"/><use href="#pt" transform="rotate(300) translate(40) rotate(0) scale(2.29 1.62)"/><use href="#pt" transform="rotate(318) translate(41) rotate(-4) scale(2.32 1.66)"/><use href="#pt" transform="rotate(342) translate(40) rotate(-2) scale(2.08 1.63)"/><use href="#pt" transform="rotate(363) translate(41) rotate(-3) scale(2.60 1.51)"/><use href="#pt" transform="rotate(389) translate(39) rotate(-3) scale(2.27 1.67)"/><use href="#pt" transform="rotate(408) translate(41) rotate(-3) scale(2.46 1.50)"/><use href="#pt" transform="rotate(431) translate(39) rotate(-3) scale(2.54 1.75)"/><use href="#pt" transform="rotate(460) translate(40) rotate(1) scale(2.22 1.75)"/><use href="#pt" transform="rotate(478) translate(39) rotate(-0) scale(2.35 1.79)"/><use href="#pt" transform="rotate(502) translate(39) rotate(2) scale(2.03 1.59)"/><use href="#pt" transform="rotate(526) translate(41) rotate(4) scale(2.42 1.64)"/><use href="#pt" transform="rotate(549) translate(41) rotate(-4) scale(2.06 1.56)"/><use href="#pt" transform="rotate(571) translate(40) rotate(-2) scale(2.60 1.60)"/><use href="#pt" transform="rotate(593) translate(42) rotate(-1) scale(2.24 1.57)"/><use href="#pt" transform="rotate(619) translate(39) rotate(-1) scale(2.29 1.54)"/><use href="#pt" transform="rotate(642) translate(40) rotate(-1) scale(2.30 1.53)"/><use href="#pt" transform="rotate(205) translate(28) rotate(0) scale(1.83 1.26)"/><use href="#pt" transform="rotate(237) translate(27) rotate(-1) scale(1.74 1.27)"/><use href="#pt" transform="rotate(264) translate(29) rotate(-2) scale(2.18 1.36)"/><use href="#pt" transform="rotate(285) translate(27) rotate(4) scale(1.79 1.38)"/><use href="#pt" transform="rotate(314) translate(28) rotate(-2) scale(2.03 1.41)"/><use href="#pt" transform="rotate(339) translate(27) rotate(1) scale(1.86 1.40)"/><use href="#pt" transform="rotate(367) translate(28) rotate(-2) scale(2.00 1.32)"/><use href="#pt" transform="rotate(387) translate(28) rotate(-3) scale(2.09 1.26)"/><use href="#pt" transform="rotate(415) translate(27) rotate(1) scale(2.04 1.35)"/><use href="#pt" transform="rotate(438) translate(28) rotate(0) scale(1.96 1.44)"/><use href="#pt" transform="rotate(467) translate(27) rotate(4) scale(1.93 1.32)"/><use href="#pt" transform="rotate(488) translate(29) rotate(-3) scale(1.74 1.23)"/><use href="#pt" transform="rotate(519) translate(28) rotate(-3) scale(1.84 1.41)"/><use href="#pt" transform="rotate(542) translate(27) rotate(4) scale(2.13 1.42)"/><use href="#pt" transform="rotate(145) translate(18) rotate(-3) scale(1.54 1.15)"/><use href="#pt" transform="rotate(181) translate(17) rotate(0) scale(1.35 0.99)"/><use href="#pt" transform="rotate(210) translate(18) rotate(6) scale(1.48 1.11)"/><use href="#pt" transform="rotate(237) translate(17) rotate(6) scale(1.49 1.11)"/><use href="#pt" transform="rotate(266) translate(18) rotate(5) scale(1.61 0.98)"/><use href="#pt" transform="rotate(301) translate(18) rotate(-4) scale(1.41 1.17)"/><use href="#pt" transform="rotate(330) translate(18) rotate(0) scale(1.58 1.05)"/><use href="#pt" transform="rotate(357) translate(19) rotate(2) scale(1.50 1.02)"/><use href="#pt" transform="rotate(386) translate(18) rotate(6) scale(1.50 1.03)"/><use href="#pt" transform="rotate(418) translate(18) rotate(0) scale(1.59 1.03)"/><use href="#pt" transform="rotate(450) translate(18) rotate(4) scale(1.53 1.09)"/><use href="#pt" transform="rotate(484) translate(19) rotate(5) scale(1.41 1.08)"/><use href="#pt" transform="rotate(140) translate(10) rotate(-2) scale(1.28 0.91)"/><use href="#pt" transform="rotate(185) translate(10) rotate(-2) scale(1.10 0.79)"/><use href="#pt" transform="rotate(223) translate(10) rotate(0) scale(1.20 0.78)"/><use href="#pt" transform="rotate(265) translate(10) rotate(2) scale(1.08 0.90)"/><use href="#pt" transform="rotate(303) translate(10) rotate(-1) scale(1.37 0.91)"/><use href="#pt" transform="rotate(338) translate(10) rotate(-2) scale(1.08 0.78)"/><use href="#pt" transform="rotate(379) translate(10) rotate(-1) scale(1.28 0.77)"/><use href="#pt" transform="rotate(427) translate(10) rotate(-6) scale(1.16 0.84)"/><use href="#pt" transform="rotate(461) translate(10) rotate(-1) scale(1.11 0.79)"/><use href="#pt" transform="rotate(161) translate(4) rotate(4) scale(0.83 0.59)"/><use href="#pt" transform="rotate(222) translate(4) rotate(4) scale(0.84 0.63)"/><use href="#pt" transform="rotate(285) translate(4) rotate(4) scale(0.90 0.62)"/><use href="#pt" transform="rotate(338) translate(4) rotate(-5) scale(0.90 0.69)"/><use href="#pt" transform="rotate(399) translate(4) rotate(1) scale(0.97 0.67)"/><use href="#pt" transform="rotate(461) translate(4) rotate(3) scale(1.01 0.69)"/></symbol></defs><rect x="1624" y="412.5" width="810" height="805" fill="#fcfcfc"/><g fill="#f3f3f2" stroke="#f9f9f9" stroke-width="1"><use href="#fa" x="-260" y="-260" width="520" height="520" transform="translate(1798 587) rotate(27) scale(1.25)"/><use href="#fb" x="-260" y="-260" width="520" height="520" transform="translate(2248 800) rotate(67) scale(1.30)"/><use href="#fb" x="-260" y="-260" width="520" height="520" transform="translate(1880 972) rotate(227) scale(1.25)"/><use href="#fa" x="-260" y="-260" width="520" height="520" transform="translate(2135 1195) rotate(127) scale(1.23)"/><use href="#fb" x="-260" y="-260" width="520" height="520" transform="translate(2132 404) rotate(317) scale(1.20)"/><use href="#fa" x="-260" y="-260" width="520" height="520" transform="translate(1545 1000) rotate(177) scale(1.06)"/><use href="#fa" x="-260" y="-260" width="520" height="520" transform="translate(2520 1160) rotate(47) scale(1.12)"/><use href="#fb" x="-260" y="-260" width="520" height="520" transform="translate(1640 1290) rotate(87) scale(1.06)"/><use href="#fa" x="-260" y="-260" width="520" height="520" transform="translate(2500 450) rotate(277) scale(1.06)"/><use href="#fb" x="-260" y="-260" width="520" height="520" transform="translate(1560 330) rotate(37) scale(1.00)"/></g><g fill="#e0ddd6" stroke="#faf9f8" stroke-width="2"><use href="#fa" x="-260" y="-260" width="520" height="520" transform="translate(1545 1000) rotate(150) scale(0.85)"/><use href="#fa" x="-260" y="-260" width="520" height="520" transform="translate(2520 1160) rotate(20) scale(0.90)"/><use href="#fb" x="-260" y="-260" width="520" height="520" transform="translate(1640 1290) rotate(60) scale(0.85)"/><use href="#fa" x="-260" y="-260" width="520" height="520" transform="translate(2500 450) rotate(250) scale(0.85)"/><use href="#fb" x="-260" y="-260" width="520" height="520" transform="translate(1560 330) rotate(10) scale(0.80)"/><use href="#fa" x="-260" y="-260" width="520" height="520" transform="translate(1798 587) rotate(0) scale(1.00)"/><use href="#fb" x="-260" y="-260" width="520" height="520" transform="translate(2248 800) rotate(40) scale(1.04)"/><use href="#fb" x="-260" y="-260" width="520" height="520" transform="translate(1880 972) rotate(200) scale(1.00)"/><use href="#fa" x="-260" y="-260" width="520" height="520" transform="translate(2135 1195) rotate(100) scale(0.98)"/><use href="#fb" x="-260" y="-260" width="520" height="520" transform="translate(2132 404) rotate(290) scale(0.96)"/></g></svg>
<div class="t" style="top:1274.0px;font-size:30px;line-height:39px;color:#262626;font-weight:700;letter-spacing:0.896px;left:1588.3px;">Screen Shot 2021-02-04 at 2.40.40 PM</div>
<div class="t" style="top:1319.0px;font-size:26px;line-height:34px;color:#8a8a8a;letter-spacing:-0.168px;left:1588.3px;">PNG image - 1.1 MB</div>
<div class="t" style="top:1366.0px;font-size:26px;line-height:34px;color:#262626;font-weight:700;letter-spacing:0.150px;left:1588.3px;">Information</div>
<div class="t" style="top:1370.0px;font-size:22px;line-height:29px;color:#8a8a8a;letter-spacing:0.297px;left:2353.3px;">Show Less</div>
<div class="t" style="top:1413.7px;font-size:22px;line-height:29px;color:#808080;-webkit-text-stroke:0.57px #808080;letter-spacing:0.953px;left:1588.3px;">Created</div>
<div class="t" style="top:1413.7px;font-size:22px;line-height:29px;color:#2a2a2a;-webkit-text-stroke:0.57px #2a2a2a;letter-spacing:0.934px;left:2047.3px;">Thursday, February 4, 2021 at 2:40 PM</div>
<div class="b" style="left:1588.3px;top:1450.5px;width:875.0000000000002px;height:1.5px;background:#e2e2e2;"></div>
<div class="t" style="top:1459.7px;font-size:22px;line-height:29px;color:#808080;-webkit-text-stroke:0.57px #808080;letter-spacing:1.335px;left:1588.3px;">Modified</div>
<div class="t" style="top:1459.7px;font-size:22px;line-height:29px;color:#2a2a2a;-webkit-text-stroke:0.57px #2a2a2a;letter-spacing:0.934px;left:2047.3px;">Thursday, February 4, 2021 at 2:40 PM</div>
<div class="b" style="left:1588.3px;top:1496.5px;width:875.0000000000002px;height:1.5px;background:#e2e2e2;"></div>
<div class="t" style="top:1505.7px;font-size:22px;line-height:29px;color:#808080;-webkit-text-stroke:0.57px #808080;letter-spacing:0.939px;left:1588.3px;">Last opened</div>
<div class="t" style="top:1505.7px;font-size:22px;line-height:29px;color:#2a2a2a;-webkit-text-stroke:0.57px #2a2a2a;letter-spacing:0.934px;left:2047.3px;">Thursday, February 4, 2021 at 2:40 PM</div>
<div class="b" style="left:1588.3px;top:1542.5px;width:875.0000000000002px;height:1.5px;background:#e2e2e2;"></div>
<div class="t" style="top:1551.7px;font-size:22px;line-height:29px;color:#808080;-webkit-text-stroke:0.57px #808080;letter-spacing:1.175px;left:1588.3px;">Content created</div>
<div class="t" style="top:1551.7px;font-size:22px;line-height:29px;color:#2a2a2a;-webkit-text-stroke:0.57px #2a2a2a;letter-spacing:0.934px;left:2047.3px;">Thursday, February 4, 2021 at 2:40 PM</div>
<div class="b" style="left:1588.3px;top:1588.5px;width:875.0000000000002px;height:1.5px;background:#e2e2e2;"></div>
<div class="t" style="top:1597.7px;font-size:22px;line-height:29px;color:#808080;-webkit-text-stroke:0.57px #808080;letter-spacing:0.951px;left:1588.3px;">Dimensions</div>
<div class="t" style="top:1597.7px;font-size:22px;line-height:29px;color:#2a2a2a;-webkit-text-stroke:0.57px #2a2a2a;letter-spacing:2.789px;left:2360.3px;">960×956</div>
<div class="b" style="left:1588.3px;top:1634.5px;width:875.0000000000002px;height:1.5px;background:#e2e2e2;"></div>
<div class="t" style="top:1643.7px;font-size:22px;line-height:29px;color:#808080;-webkit-text-stroke:0.57px #808080;letter-spacing:0.894px;left:1588.3px;">Resolution</div>
<div class="t" style="top:1643.7px;font-size:22px;line-height:29px;color:#2a2a2a;-webkit-text-stroke:0.57px #2a2a2a;letter-spacing:1.872px;left:2365.8px;">144×144</div>
<div class="b" style="left:1588.3px;top:1680.5px;width:875.0000000000002px;height:1.5px;background:#e2e2e2;"></div>
<div class="t" style="top:1689.7px;font-size:22px;line-height:29px;color:#808080;-webkit-text-stroke:0.57px #808080;letter-spacing:0.911px;left:1588.3px;">Color space</div>
<div class="t" style="top:1689.7px;font-size:22px;line-height:29px;color:#2a2a2a;-webkit-text-stroke:0.57px #2a2a2a;letter-spacing:-1.094px;left:2417.8px;">RGB</div>
<div class="b" style="left:1588.3px;top:1726.5px;width:875.0000000000002px;height:1.5px;background:#e2e2e2;"></div>
<div class="t" style="top:1735.7px;font-size:22px;line-height:29px;color:#808080;-webkit-text-stroke:0.57px #808080;letter-spacing:1.116px;left:1588.3px;">Color profile</div>
<div class="t" style="top:1735.7px;font-size:22px;line-height:29px;color:#2a2a2a;-webkit-text-stroke:0.57px #2a2a2a;letter-spacing:1.182px;left:2413.3px;">iMac</div>
<div class="t" style="top:1796.0px;font-size:26px;line-height:34px;color:#262626;font-weight:700;letter-spacing:-0.255px;left:1588.3px;">Tags</div>
<div class="t" style="top:1840.0px;font-size:26px;line-height:34px;color:#c3c3c3;letter-spacing:0.139px;left:1592.7px;">Add Tags...</div>
<svg class="b" style="left:1856px;top:1912px;" width="34" height="34" viewBox="0 0 34 34"><rect x="3" y="12.5" width="18" height="18" rx="2.5" fill="none" stroke="#858585" stroke-width="2"/><path d="M19 5.5 H24 a6 6 0 0 1 6 6 V13 M22.5 2 L19 5.5 L22.5 9" fill="none" stroke="#858585" stroke-width="1.8" stroke-linecap="round" stroke-linejoin="round"/></svg>
<svg class="b" style="left:2010px;top:1912px;" width="32" height="32" viewBox="0 0 32 32"><circle cx="15.5" cy="16" r="13" fill="none" stroke="#858585" stroke-width="1.9"/><path d="M10.6 26 L15.5 8.6 L20.4 26" fill="none" stroke="#858585" stroke-width="1.7" stroke-linejoin="round"/><path d="M15.5 8.6 L12.8 18.6 Q15.5 16.6 18.2 18.6 Z" fill="#858585" stroke="#858585" stroke-width="1" stroke-linejoin="round"/></svg>
<svg class="b" style="left:2162px;top:1912px;" width="32" height="32" viewBox="0 0 32 32"><circle cx="15.5" cy="16" r="13" fill="none" stroke="#858585" stroke-width="1.9"/><circle cx="9.5" cy="16" r="1.9" fill="#858585"/><circle cx="15.5" cy="16" r="1.9" fill="#858585"/><circle cx="21.5" cy="16" r="1.9" fill="#858585"/></svg>
<div class="t" style="top:1962.0px;font-size:22px;line-height:29px;color:#7c7c7c;letter-spacing:0.686px;left:1816.5px;">Rotate Left</div>
<div class="t" style="top:1962.0px;font-size:22px;line-height:29px;color:#7c7c7c;letter-spacing:0.828px;left:1987.0px;">Markup</div>
<div class="t" style="top:1962.0px;font-size:22px;line-height:29px;color:#7c7c7c;letter-spacing:0.255px;left:2142.5px;">More...</div>
<div class="b" style="left:323px;top:358px;width:2156px;height:901px;box-sizing:border-box;border:10px solid #000;"></div>
</div></body></html>
